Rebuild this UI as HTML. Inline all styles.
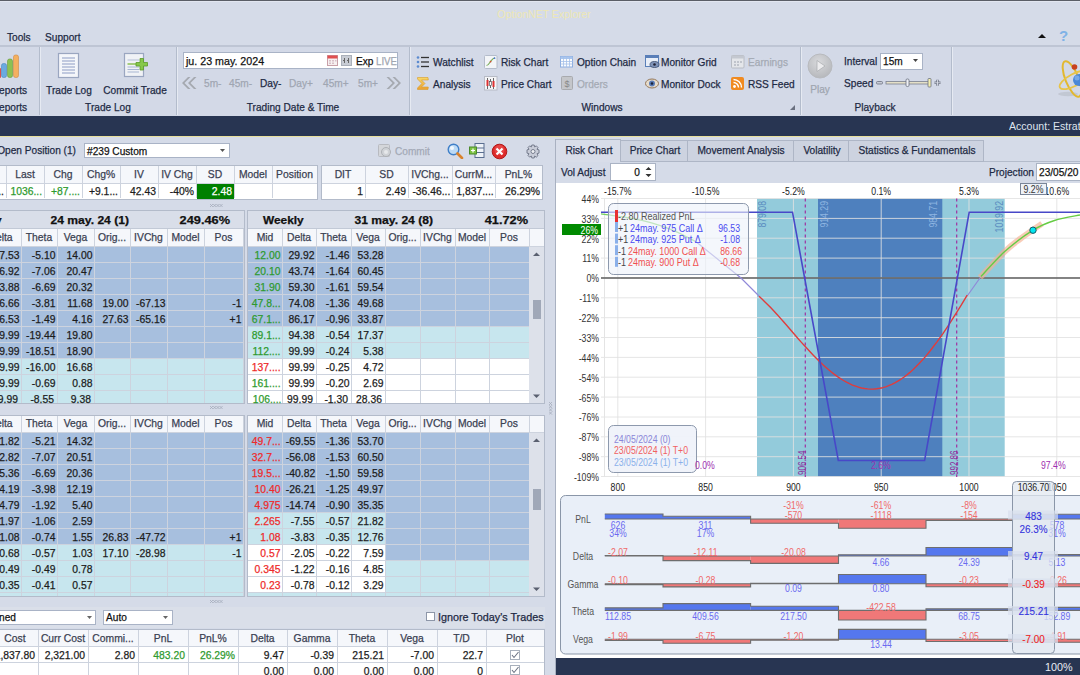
<!DOCTYPE html><html><head><meta charset="utf-8"><style>
html,body{margin:0;padding:0;width:1080px;height:675px;overflow:hidden;background:#d5dbe8;font-family:"Liberation Sans", sans-serif;}
#root{position:relative;width:1080px;height:675px;overflow:hidden;}
.t{position:absolute;font-size:11px;line-height:13px;white-space:nowrap;color:#1e2535;-webkit-text-stroke:0.25px currentColor;}
</style></head><body><div id="root">
<div style="position:absolute;left:0px;top:0px;width:1080px;height:116px;background:#d5dbe8;"></div>
<div style="position:absolute;left:0px;top:0px;width:1080px;height:1px;background:#5a5e66;"></div>
<div class="t" style="left:444.0px;top:8px;width:200px;text-align:center;transform:scaleX(0.95);color:#ede7b4;-webkit-text-stroke:0;">OptionNET Explorer</div>
<div class="t" style="left:7px;top:31px;transform-origin:0 0;transform:scaleX(0.92);color:#1e2a44;">Tools</div>
<div class="t" style="left:45px;top:31px;transform-origin:0 0;transform:scaleX(0.92);color:#1e2a44;">Support</div>
<svg style="position:absolute;left:1037px;top:33px" width="10" height="6"><path d="M1 5 L5 1 L9 5 Z" fill="#111"/></svg>
<div class="t" style="left:1059px;top:28px;transform-origin:0 0;transform:scaleX(1);color:#7fb2e6;font-size:15px;font-weight:bold;line-height:16px;-webkit-text-stroke:0;">?</div>
<div style="position:absolute;left:0px;top:47px;width:1080px;height:69px;background:#d3d9e7;"></div>
<div style="position:absolute;left:0px;top:45px;width:1080px;height:2px;background:#bec5d4;"></div>
<div style="position:absolute;left:0px;top:1px;width:1080px;height:1px;background:#e2e6f0;"></div>
<div style="position:absolute;left:39px;top:47px;width:1px;height:68px;background:#b3bccc;"></div>
<div style="position:absolute;left:40px;top:47px;width:1px;height:68px;background:#e6eaf2;"></div>
<div style="position:absolute;left:176px;top:47px;width:1px;height:68px;background:#b3bccc;"></div>
<div style="position:absolute;left:177px;top:47px;width:1px;height:68px;background:#e6eaf2;"></div>
<div style="position:absolute;left:409px;top:47px;width:1px;height:68px;background:#b3bccc;"></div>
<div style="position:absolute;left:410px;top:47px;width:1px;height:68px;background:#e6eaf2;"></div>
<div style="position:absolute;left:800px;top:47px;width:1px;height:68px;background:#b3bccc;"></div>
<div style="position:absolute;left:801px;top:47px;width:1px;height:68px;background:#e6eaf2;"></div>
<div style="position:absolute;left:951px;top:47px;width:1px;height:68px;background:#b3bccc;"></div>
<div style="position:absolute;left:952px;top:47px;width:1px;height:68px;background:#e6eaf2;"></div>
<svg style="position:absolute;left:0px;top:52px" width="22" height="28">
<rect x="-2" y="16" width="3" height="10" rx="1" fill="#d9534f"/>
<rect x="1.5" y="11.5" width="5" height="14" rx="2" fill="#6aaae0" stroke="#4a86c0" stroke-width="0.6"/>
<rect x="7.5" y="7" width="5" height="18.5" rx="2" fill="#8cc152" stroke="#6a9a3a" stroke-width="0.6"/>
<rect x="13.5" y="3" width="5" height="22.5" rx="2" fill="#f4b060" stroke="#d08a40" stroke-width="0.6"/>
</svg>
<div class="t" style="left:-1px;top:84px;transform-origin:0 0;transform:scaleX(0.92);color:#1e2a44;">eports</div>
<div class="t" style="left:-1px;top:101px;transform-origin:0 0;transform:scaleX(0.92);color:#1e2a44;">eports</div>
<svg style="position:absolute;left:57px;top:52px" width="24" height="28">
<rect x="1.5" y="1.5" width="20" height="24" fill="#f4f6fa" stroke="#9aa6c0" stroke-width="1.2"/>
<g stroke="#8d9cc4" stroke-width="1"><line x1="5" y1="6" x2="18" y2="6"/><line x1="5" y1="9" x2="18" y2="9"/><line x1="5" y1="12" x2="18" y2="12"/><line x1="5" y1="15" x2="18" y2="15"/><line x1="5" y1="18" x2="18" y2="18"/><line x1="5" y1="21" x2="18" y2="21"/></g>
</svg>
<svg style="position:absolute;left:123px;top:52px" width="28" height="28">
<rect x="1.5" y="1.5" width="19" height="23" fill="#f0f2f6" stroke="#9aa6c0" stroke-width="1.2"/>
<line x1="4.5" y1="8" x2="16" y2="8" stroke="#b4bfd6" stroke-width="1"/>
<line x1="4.5" y1="12" x2="13" y2="12" stroke="#8cc152" stroke-width="1.5"/>
<g stroke="#a8b6d2" stroke-width="1"><line x1="4.5" y1="15" x2="16" y2="15"/><line x1="4.5" y1="17.5" x2="16" y2="17.5"/><line x1="4.5" y1="20" x2="16" y2="20"/></g>
<path d="M17 6.5 h3.5 v4 h4 v3.5 h-4 v4 h-3.5 v-4 h-4 v-3.5 h4 z" fill="#86c84a" stroke="#5a9a2a" stroke-width="0.8"/>
</svg>
<div class="t" style="left:-31.0px;top:84px;width:200px;text-align:center;transform:scaleX(0.92);color:#1e2a44;">Trade Log</div>
<div class="t" style="left:35.0px;top:84px;width:200px;text-align:center;transform:scaleX(0.92);color:#1e2a44;">Commit Trade</div>
<div class="t" style="left:8.0px;top:101px;width:200px;text-align:center;transform:scaleX(0.92);color:#1e2a44;">Trade Log</div>
<div style="position:absolute;left:183px;top:52px;width:215px;height:17px;background:#fff;border:1px solid #a9b3c6;box-sizing:border-box;"></div>
<div class="t" style="left:186px;top:55px;transform-origin:0 0;transform:scaleX(0.97);color:#111;">ju. 23 may. 2024</div>
<svg style="position:absolute;left:327px;top:55px" width="12" height="11">
<rect x="0.5" y="0.5" width="10" height="10" fill="#f7f0f0" stroke="#c8a0a8"/>
<rect x="0.5" y="0.5" width="10" height="3" fill="#e05050"/>
<g fill="#d8c0c8"><rect x="2" y="5" width="2" height="1.5"/><rect x="5" y="5" width="2" height="1.5"/><rect x="2" y="7.5" width="2" height="1.5"/><rect x="5" y="7.5" width="2" height="1.5"/><rect x="8" y="5" width="1.5" height="1.5"/></g>
</svg>
<svg style="position:absolute;left:341px;top:55px" width="12" height="11">
<rect x="0.5" y="0.5" width="10" height="10" fill="#c8ccd4" stroke="#aab0ba"/>
<path d="M3.5 3 v5 M7.5 3 v5 M2 5.5 h2 M6 5.5 h2" stroke="#666" stroke-width="1"/>
</svg>
<div class="t" style="left:356px;top:55px;transform-origin:0 0;transform:scaleX(0.92);color:#111;">Exp</div>
<div class="t" style="left:376px;top:55px;transform-origin:0 0;transform:scaleX(0.88);color:#a0a6b0;">LIVE</div>
<svg style="position:absolute;left:181px;top:76px" width="16" height="14">
<path d="M7 1 L1 7 L7 13 L9.5 13 L3.5 7 L9.5 1 Z M13 1 L7 7 L13 13 L15.5 13 L9.5 7 L15.5 1 Z" fill="#a5a9b0"/>
</svg>
<svg style="position:absolute;left:386px;top:76px" width="16" height="14">
<path d="M9 1 L15 7 L9 13 L6.5 13 L12.5 7 L6.5 1 Z M3 1 L9 7 L3 13 L0.5 13 L6.5 7 L0.5 1 Z" fill="#a5a9b0"/>
</svg>
<div class="t" style="left:204px;top:77px;transform-origin:0 0;transform:scaleX(0.92);color:#a0a6b2;">5m-</div>
<div class="t" style="left:229px;top:77px;transform-origin:0 0;transform:scaleX(0.92);color:#a0a6b2;">45m-</div>
<div class="t" style="left:260px;top:77px;transform-origin:0 0;transform:scaleX(0.92);color:#1e2a44;">Day-</div>
<div class="t" style="left:289px;top:77px;transform-origin:0 0;transform:scaleX(0.92);color:#a0a6b2;">Day+</div>
<div class="t" style="left:323px;top:77px;transform-origin:0 0;transform:scaleX(0.92);color:#a0a6b2;">45m+</div>
<div class="t" style="left:358px;top:77px;transform-origin:0 0;transform:scaleX(0.92);color:#a0a6b2;">5m+</div>
<div class="t" style="left:193.0px;top:101px;width:200px;text-align:center;transform:scaleX(0.92);color:#1e2a44;">Trading Date &amp; Time</div>
<svg style="position:absolute;left:416px;top:55px" width="14" height="14">
<g fill="#5b8bd0"><circle cx="2" cy="2.5" r="1.3"/><circle cx="2" cy="7" r="1.3"/><circle cx="2" cy="11.5" r="1.3"/></g>
<g stroke="#333" stroke-width="1.3"><line x1="5" y1="2.5" x2="13" y2="2.5"/><line x1="5" y1="7" x2="13" y2="7"/><line x1="5" y1="11.5" x2="13" y2="11.5"/></g>
</svg>
<div class="t" style="left:433px;top:56px;transform-origin:0 0;transform:scaleX(0.92);color:#1e2a44;">Watchlist</div>
<svg style="position:absolute;left:484px;top:54px" width="14" height="15">
<rect x="0.5" y="1.5" width="12.5" height="13" rx="1" fill="#f3f5f8" stroke="#b4bccb"/>
<path d="M2.5 11.5 C4.5 11.5 5 9.5 6.5 7.5 C8 5.5 9 4 11 4" stroke="#77aa55" stroke-width="1.1" fill="none"/>
<circle cx="6.6" cy="7.6" r="0.9" fill="#d05030"/><circle cx="10.5" cy="4.2" r="0.9" fill="#4a7ad0"/>
</svg>
<div class="t" style="left:501px;top:56px;transform-origin:0 0;transform:scaleX(0.92);color:#1e2a44;">Risk Chart</div>
<svg style="position:absolute;left:560px;top:55px" width="14" height="14">
<rect x="0.5" y="1.5" width="12" height="10.5" fill="#fbfcfe" stroke="#8eaee0"/>
<rect x="0.5" y="1.5" width="12" height="2.5" fill="#a9c6ee"/>
<path d="M0.5 6.5 h12 M0.5 9 h12 M3.5 1.5 v10.5 M6.5 1.5 v10.5 M9.5 1.5 v10.5" stroke="#a6c0ea" stroke-width="0.8"/>
</svg>
<div class="t" style="left:577px;top:56px;transform-origin:0 0;transform:scaleX(0.92);color:#1e2a44;">Option Chain</div>
<svg style="position:absolute;left:645px;top:55px" width="15" height="14">
<rect x="0.5" y="0.5" width="13" height="11" fill="#e8eef8" stroke="#5a7fb8"/>
<rect x="0.5" y="0.5" width="13" height="2.5" fill="#5a7fb8"/>
<ellipse cx="9.5" cy="9.5" rx="4.5" ry="3" fill="#7f93b8" stroke="#3a4a6a" stroke-width="0.8"/>
<circle cx="9.5" cy="9.5" r="1.3" fill="#223"/>
</svg>
<div class="t" style="left:661px;top:56px;transform-origin:0 0;transform:scaleX(0.92);color:#1e2a44;">Monitor Grid</div>
<svg style="position:absolute;left:731px;top:55px" width="14" height="14">
<rect x="0.5" y="0.5" width="12.5" height="12.5" rx="1" fill="#e4e6ea" stroke="#b8bcc4"/>
<rect x="0.5" y="0.5" width="12.5" height="3" fill="#c4c8d0"/>
<g fill="#c0c4cc"><rect x="3" y="6" width="2" height="2"/><rect x="6" y="6" width="2" height="2"/><rect x="9" y="6" width="2" height="2"/><rect x="3" y="9" width="2" height="2"/><rect x="6" y="9" width="2" height="2"/></g>
</svg>
<div class="t" style="left:748px;top:56px;transform-origin:0 0;transform:scaleX(0.92);color:#a4aab4;">Earnings</div>
<svg style="position:absolute;left:416px;top:76px" width="14" height="15">
<defs><linearGradient id="sg" x1="0" y1="0" x2="0" y2="1"><stop offset="0" stop-color="#f8d868"/><stop offset="1" stop-color="#eaa030"/></linearGradient></defs>
<path d="M1.5 1.5 H12 L12.3 4 H5.5 L9 7.5 L5.5 11 H12.3 L12 13.5 H1.5 V12 L5.8 7.5 L1.5 3 Z" fill="url(#sg)" stroke="#d89a28" stroke-width="0.6"/>
</svg>
<div class="t" style="left:433px;top:78px;transform-origin:0 0;transform:scaleX(0.92);color:#1e2a44;">Analysis</div>
<svg style="position:absolute;left:484px;top:76px" width="14" height="15">
<rect x="0.5" y="0.5" width="12.5" height="13.5" fill="#f5f6f8" stroke="#b8bcc6"/>
<path d="M3.5 2 v11 M6.5 3 v9 M9.5 2 v11" stroke="#444" stroke-width="0.8"/>
<rect x="2.5" y="4" width="2" height="6" fill="#dd3333"/><rect x="8.5" y="5" width="2" height="6" fill="#dd3333"/><rect x="5.5" y="5.5" width="2" height="4" fill="#fff" stroke="#444" stroke-width="0.6"/>
</svg>
<div class="t" style="left:501px;top:78px;transform-origin:0 0;transform:scaleX(0.92);color:#1e2a44;">Price Chart</div>
<svg style="position:absolute;left:561px;top:76px" width="13" height="15">
<rect x="0.5" y="0.5" width="11" height="13" rx="1" fill="#c4c6ca" stroke="#a8aaae"/>
<text x="6" y="11" font-size="9" text-anchor="middle" fill="#888" font-family="Liberation Sans">$</text>
</svg>
<div class="t" style="left:577px;top:78px;transform-origin:0 0;transform:scaleX(0.92);color:#a4aab4;">Orders</div>
<svg style="position:absolute;left:645px;top:78px" width="15" height="11">
<ellipse cx="7" cy="5.5" rx="6.5" ry="4.5" fill="#e6dccc" stroke="#8a6a48" stroke-width="0.9"/>
<circle cx="7" cy="5.5" r="3" fill="#5a7cb8"/><circle cx="7" cy="5.5" r="1.3" fill="#1a2238"/>
</svg>
<div class="t" style="left:661px;top:78px;transform-origin:0 0;transform:scaleX(0.92);color:#1e2a44;">Monitor Dock</div>
<svg style="position:absolute;left:731px;top:77px" width="14" height="14">
<rect x="0" y="0" width="13" height="13" rx="2" fill="#f08a20"/>
<circle cx="3.5" cy="9.5" r="1.4" fill="#fff"/>
<path d="M2.5 5.5 A5 5 0 0 1 7.5 10.5 M2.5 2.5 A8 8 0 0 1 10.5 10.5" stroke="#fff" stroke-width="1.4" fill="none"/>
</svg>
<div class="t" style="left:748px;top:78px;transform-origin:0 0;transform:scaleX(0.92);color:#1e2a44;">RSS Feed</div>
<div class="t" style="left:502.0px;top:101px;width:200px;text-align:center;transform:scaleX(0.92);color:#1e2a44;">Windows</div>
<svg style="position:absolute;left:790px;top:105px" width="6" height="6"><path d="M5 0 V5 H0 Z" fill="#6a7080"/></svg>
<svg style="position:absolute;left:807px;top:53px" width="26" height="26">
<defs><radialGradient id="pg" cx="0.45" cy="0.35" r="0.7"><stop offset="0" stop-color="#d8d9dc"/><stop offset="1" stop-color="#b4b6ba"/></radialGradient></defs>
<circle cx="13" cy="13" r="12" fill="url(#pg)" stroke="#b8babe"/>
<path d="M10 7.5 L18 13 L10 18.5 Z" fill="#ececee" stroke="#a8aaae" stroke-width="0.7"/>
</svg>
<div class="t" style="left:720.0px;top:83px;width:200px;text-align:center;transform:scaleX(0.92);color:#a0a6b0;">Play</div>
<div class="t" style="left:844px;top:55px;transform-origin:0 0;transform:scaleX(0.92);color:#1e2a44;">Interval</div>
<div style="position:absolute;left:880px;top:53px;width:43px;height:17px;background:#fff;border:1px solid #a9b3c6;box-sizing:border-box;"></div>
<div class="t" style="left:883px;top:55px;transform-origin:0 0;transform:scaleX(0.92);color:#111;">15m</div>
<svg style="position:absolute;left:913px;top:59px" width="6" height="4"><path d="M0 0 H5 L2.5 3 Z" fill="#444"/></svg>
<div class="t" style="left:844px;top:77px;transform-origin:0 0;transform:scaleX(0.92);color:#1e2a44;">Speed</div>
<svg style="position:absolute;left:876px;top:77px" width="66" height="12">
<rect x="0.5" y="4.5" width="6" height="2.5" rx="1" fill="#c8ccd6" stroke="#6a7080" stroke-width="0.8"/>
<rect x="10" y="4.5" width="43" height="2.5" fill="#e4e0c8" stroke="#7a8090" stroke-width="0.8"/>
<rect x="30" y="2" width="3" height="7.5" rx="1.2" fill="#eef0f4" stroke="#6a7080" stroke-width="0.8"/>
<rect x="52" y="1.5" width="3" height="8.5" rx="0.8" fill="#f4efb0" stroke="#6a7080" stroke-width="0.8"/>
<path d="M58.5 5.8 H64.5 M61.5 2.8 V8.8" stroke="#6a7080" stroke-width="2.4"/>
<path d="M58.5 5.8 H64.5 M61.5 2.8 V8.8" stroke="#d8dce6" stroke-width="0.9"/>
</svg>
<div class="t" style="left:775.0px;top:101px;width:200px;text-align:center;transform:scaleX(0.92);color:#1e2a44;">Playback</div>
<svg style="position:absolute;left:1055px;top:55px" width="25" height="48">
<ellipse cx="13" cy="39" rx="10" ry="2.2" fill="#b8bcc6" opacity="0.6"/>
<ellipse cx="17" cy="24" rx="6.5" ry="19" transform="rotate(-22 17 24)" fill="none" stroke="#e2b830" stroke-width="2"/>
<ellipse cx="19" cy="25" rx="16" ry="6" transform="rotate(-28 19 25)" fill="none" stroke="#e8c448" stroke-width="1.8"/>
<circle cx="24" cy="25" r="6" fill="#4a88d8"/>
<circle cx="22" cy="23" r="2.5" fill="#8ab8ee" opacity="0.7"/>
<circle cx="19.5" cy="12" r="2.8" fill="#c8401e"/>
</svg>
<div style="position:absolute;left:0px;top:116px;width:1080px;height:20px;background:#283552;"></div>
<div style="position:absolute;left:0px;top:136px;width:1080px;height:1px;background:#e7df9c;"></div>
<div class="t" style="left:1009px;top:120px;transform-origin:0 0;transform:scaleX(0.96);color:#dfe4ee;-webkit-text-stroke:0;">Account: Estrate</div>
<div class="t" style="left:-124px;top:144px;width:200px;text-align:right;transform-origin:100% 0;transform:scaleX(0.92);color:#1e2a44;">Open Position (1)</div>
<div style="position:absolute;left:84px;top:143px;width:146px;height:15px;background:#fff;border:1px solid #a9b3c6;box-sizing:border-box;"></div>
<div class="t" style="left:87px;top:145px;transform-origin:0 0;transform:scaleX(0.92);color:#111;">#239 Custom</div>
<svg style="position:absolute;left:220px;top:149px" width="6" height="4"><path d="M0 0 H5 L2.5 3 Z" fill="#555"/></svg>
<svg style="position:absolute;left:378px;top:144px" width="14" height="14">
<rect x="0.5" y="0.5" width="11" height="12" rx="1" fill="#d4d6da" stroke="#b8bac0"/>
<circle cx="8" cy="8" r="4.5" fill="#cfd2d6" stroke="#aeb1b6"/><circle cx="8" cy="8" r="2" fill="#e6e8ea"/>
</svg>
<div class="t" style="left:395px;top:145px;transform-origin:0 0;transform:scaleX(0.92);color:#a3a9b6;">Commit</div>
<svg style="position:absolute;left:447px;top:143px" width="17" height="16">
<circle cx="6.5" cy="6.5" r="5.3" fill="#bcdaf5" stroke="#3f7fc8" stroke-width="1.4"/>
<circle cx="5" cy="5" r="2" fill="#fff" opacity="0.8"/>
<path d="M10.5 10.5 L15 15" stroke="#d9822b" stroke-width="2.6" stroke-linecap="round"/>
</svg>
<svg style="position:absolute;left:469px;top:143px" width="16" height="15">
<rect x="6" y="0.5" width="9" height="14" fill="#eef2f8" stroke="#5a6e90"/>
<path d="M6 5 H15 M6 9.5 H15" stroke="#5a6e90"/>
<rect x="0.5" y="4" width="7" height="7" fill="#7cc242" stroke="#4a8a2a"/>
<path d="M2 7.5 H6 M4 5.5 V9.5" stroke="#fff" stroke-width="1.2"/>
</svg>
<svg style="position:absolute;left:491px;top:143px" width="17" height="17">
<circle cx="8.5" cy="8.5" r="7.3" fill="#dd2a2a" stroke="#b01818"/>
<circle cx="8.5" cy="7" r="5" fill="#f06060" opacity="0.5"/>
<path d="M5.5 5.5 L11.5 11.5 M11.5 5.5 L5.5 11.5" stroke="#fff" stroke-width="2.2"/>
</svg>
<svg style="position:absolute;left:525px;top:144px" width="16" height="15">
<g transform="translate(8 7.5)">
<path d="M-1.2 -6.5 H1.2 L1.6 -4.6 L3.4 -5.6 L5 -4 L4 -2.2 L6 -1.6 V1.6 L4 2.2 L5 4 L3.4 5.6 L1.6 4.6 L1.2 6.5 H-1.2 L-1.6 4.6 L-3.4 5.6 L-5 4 L-4 2.2 L-6 1.6 V-1.6 L-4 -2.2 L-5 -4 L-3.4 -5.6 L-1.6 -4.6 Z" fill="#c8ccd8" stroke="#6d7486" stroke-width="0.9"/>
<circle r="2" fill="#eef0f4" stroke="#6d7486" stroke-width="0.9"/></g>
</svg>
<div style="position:absolute;left:-1px;top:165px;width:319px;height:35px;background:#ffffff;border:1px solid #b3bbca;box-sizing:border-box;"></div>
<div style="position:absolute;left:0px;top:166px;width:317px;height:17px;background:#f5f7fb;"></div>
<div style="position:absolute;left:6px;top:166px;width:1px;height:32px;background:#cdd3de;"></div>
<div style="position:absolute;left:44px;top:166px;width:1px;height:32px;background:#cdd3de;"></div>
<div style="position:absolute;left:82px;top:166px;width:1px;height:32px;background:#cdd3de;"></div>
<div style="position:absolute;left:120px;top:166px;width:1px;height:32px;background:#cdd3de;"></div>
<div style="position:absolute;left:158px;top:166px;width:1px;height:32px;background:#cdd3de;"></div>
<div style="position:absolute;left:196px;top:166px;width:1px;height:32px;background:#cdd3de;"></div>
<div style="position:absolute;left:234px;top:166px;width:1px;height:32px;background:#cdd3de;"></div>
<div style="position:absolute;left:272px;top:166px;width:1px;height:32px;background:#cdd3de;"></div>
<div style="position:absolute;left:0px;top:183px;width:317px;height:1px;background:#cdd3de;"></div>
<div style="position:absolute;left:197px;top:184px;width:37px;height:15px;background:#008000;"></div>
<div class="t" style="left:-8px;top:185.0px;width:12px;text-align:right;transform-origin:100% 0;transform:scaleX(0.94);color:#1c1c1c;">..</div>
<div class="t" style="left:7px;top:168.0px;width:36px;text-align:center;transform-origin:50% 0;transform:scaleX(0.94);color:#3a4152;">Last</div>
<div class="t" style="left:8px;top:185.0px;width:34px;text-align:right;transform-origin:100% 0;transform:scaleX(0.94);color:#2e9a2e;">1036...</div>
<div class="t" style="left:45px;top:168.0px;width:36px;text-align:center;transform-origin:50% 0;transform:scaleX(0.94);color:#3a4152;">Chg</div>
<div class="t" style="left:46px;top:185.0px;width:34px;text-align:right;transform-origin:100% 0;transform:scaleX(0.94);color:#2e9a2e;">+87....</div>
<div class="t" style="left:83px;top:168.0px;width:36px;text-align:center;transform-origin:50% 0;transform:scaleX(0.94);color:#3a4152;">Chg%</div>
<div class="t" style="left:84px;top:185.0px;width:34px;text-align:right;transform-origin:100% 0;transform:scaleX(0.94);color:#1c1c1c;">+9.1...</div>
<div class="t" style="left:121px;top:168.0px;width:36px;text-align:center;transform-origin:50% 0;transform:scaleX(0.94);color:#3a4152;">IV</div>
<div class="t" style="left:122px;top:185.0px;width:34px;text-align:right;transform-origin:100% 0;transform:scaleX(0.94);color:#1c1c1c;">42.43</div>
<div class="t" style="left:159px;top:168.0px;width:36px;text-align:center;transform-origin:50% 0;transform:scaleX(0.94);color:#3a4152;">IV Chg</div>
<div class="t" style="left:160px;top:185.0px;width:34px;text-align:right;transform-origin:100% 0;transform:scaleX(0.94);color:#1c1c1c;">-40%</div>
<div class="t" style="left:197px;top:168.0px;width:36px;text-align:center;transform-origin:50% 0;transform:scaleX(0.94);color:#3a4152;">SD</div>
<div class="t" style="left:198px;top:185.0px;width:34px;text-align:right;transform-origin:100% 0;transform:scaleX(0.94);color:#ffffff;">2.48</div>
<div class="t" style="left:235px;top:168.0px;width:36px;text-align:center;transform-origin:50% 0;transform:scaleX(0.94);color:#3a4152;">Model</div>
<div class="t" style="left:273px;top:168.0px;width:43px;text-align:center;transform-origin:50% 0;transform:scaleX(0.94);color:#3a4152;">Position</div>
<div style="position:absolute;left:321px;top:165px;width:222px;height:35px;background:#ffffff;border:1px solid #b3bbca;box-sizing:border-box;"></div>
<div style="position:absolute;left:322px;top:166px;width:220px;height:17px;background:#f5f7fb;"></div>
<div style="position:absolute;left:365px;top:166px;width:1px;height:32px;background:#cdd3de;"></div>
<div style="position:absolute;left:408px;top:166px;width:1px;height:32px;background:#cdd3de;"></div>
<div style="position:absolute;left:452px;top:166px;width:1px;height:32px;background:#cdd3de;"></div>
<div style="position:absolute;left:495px;top:166px;width:1px;height:32px;background:#cdd3de;"></div>
<div style="position:absolute;left:322px;top:183px;width:220px;height:1px;background:#cdd3de;"></div>
<div class="t" style="left:322px;top:168.0px;width:42px;text-align:center;transform-origin:50% 0;transform:scaleX(0.94);color:#3a4152;">DIT</div>
<div class="t" style="left:323px;top:185.0px;width:40px;text-align:right;transform-origin:100% 0;transform:scaleX(0.94);color:#1c1c1c;">1</div>
<div class="t" style="left:366px;top:168.0px;width:41px;text-align:center;transform-origin:50% 0;transform:scaleX(0.94);color:#3a4152;">SD</div>
<div class="t" style="left:367px;top:185.0px;width:39px;text-align:right;transform-origin:100% 0;transform:scaleX(0.94);color:#1c1c1c;">2.49</div>
<div class="t" style="left:409px;top:168.0px;width:42px;text-align:center;transform-origin:50% 0;transform:scaleX(0.94);color:#3a4152;">IVChg...</div>
<div class="t" style="left:410px;top:185.0px;width:40px;text-align:right;transform-origin:100% 0;transform:scaleX(0.94);color:#1c1c1c;">-36.46...</div>
<div class="t" style="left:453px;top:168.0px;width:41px;text-align:center;transform-origin:50% 0;transform:scaleX(0.94);color:#3a4152;">CurrM...</div>
<div class="t" style="left:454px;top:185.0px;width:39px;text-align:right;transform-origin:100% 0;transform:scaleX(0.94);color:#1c1c1c;">1,837....</div>
<div class="t" style="left:496px;top:168.0px;width:45px;text-align:center;transform-origin:50% 0;transform:scaleX(0.94);color:#3a4152;">PnL%</div>
<div class="t" style="left:497px;top:185.0px;width:43px;text-align:right;transform-origin:100% 0;transform:scaleX(0.94);color:#1c1c1c;">26.29%</div>
<svg style="position:absolute;left:210px;top:204px" width="14" height="4"><g stroke="#a4acbb" stroke-width="0.8" fill="none"><path d="M0.0 0 L3.0 3 M3.0 0 L0.0 3" /><path d="M3.2 0 L6.2 3 M6.2 0 L3.2 3" /><path d="M6.4 0 L9.4 3 M9.4 0 L6.4 3" /><path d="M9.600000000000001 0 L12.600000000000001 3 M12.600000000000001 0 L9.600000000000001 3" /></g></svg>
<svg style="position:absolute;left:210px;top:406px" width="14" height="4"><g stroke="#a4acbb" stroke-width="0.8" fill="none"><path d="M0.0 0 L3.0 3 M3.0 0 L0.0 3" /><path d="M3.2 0 L6.2 3 M6.2 0 L3.2 3" /><path d="M6.4 0 L9.4 3 M9.4 0 L6.4 3" /><path d="M9.600000000000001 0 L12.600000000000001 3 M12.600000000000001 0 L9.600000000000001 3" /></g></svg>
<svg style="position:absolute;left:210px;top:600px" width="14" height="4"><g stroke="#a4acbb" stroke-width="0.8" fill="none"><path d="M0.0 0 L3.0 3 M3.0 0 L0.0 3" /><path d="M3.2 0 L6.2 3 M6.2 0 L3.2 3" /><path d="M6.4 0 L9.4 3 M9.4 0 L6.4 3" /><path d="M9.600000000000001 0 L12.600000000000001 3 M12.600000000000001 0 L9.600000000000001 3" /></g></svg>
<svg style="position:absolute;left:549px;top:402px" width="4" height="14"><g stroke="#a4acbb" stroke-width="0.8" fill="none"><path d="M0 0.0 L3 3.0 M3 0.0 L0 3.0" /><path d="M0 3.2 L3 6.2 M3 3.2 L0 6.2" /><path d="M0 6.4 L3 9.4 M3 6.4 L0 9.4" /><path d="M0 9.600000000000001 L3 12.600000000000001 M3 9.600000000000001 L0 12.600000000000001" /></g></svg>
<div style="position:absolute;left:-1px;top:210px;width:246px;height:194px;background:#ffffff;border:1px solid #b3bbca;box-sizing:border-box;"></div>
<div style="position:absolute;left:0px;top:211px;width:244px;height:17px;background:#d9dee9;"></div>
<div style="position:absolute;left:0px;top:228px;width:244px;height:1px;background:#c2c9d6;"></div>
<div class="t" style="left:-39px;top:214px;transform-origin:0 0;transform:scaleX(1.08);font-weight:bold;color:#111;">Weekly</div>
<div class="t" style="left:-71px;top:214px;width:200px;text-align:right;transform-origin:100% 0;transform:scaleX(1.1);font-weight:bold;color:#111;">24 may. 24 (1)</div>
<div class="t" style="left:30px;top:214px;width:200px;text-align:right;transform-origin:100% 0;transform:scaleX(1.16);font-weight:bold;color:#111;">249.46%</div>
<div style="position:absolute;left:0px;top:229px;width:244px;height:18px;background:#f5f7fb;"></div>
<div style="position:absolute;left:-20px;top:247px;width:41px;height:16px;background:#a7bfde;"></div>
<div style="position:absolute;left:21px;top:247px;width:36px;height:16px;background:#a7bfde;"></div>
<div style="position:absolute;left:57px;top:247px;width:37px;height:16px;background:#a7bfde;"></div>
<div style="position:absolute;left:94px;top:247px;width:36px;height:16px;background:#a7bfde;"></div>
<div style="position:absolute;left:130px;top:247px;width:37px;height:16px;background:#a7bfde;"></div>
<div style="position:absolute;left:167px;top:247px;width:37px;height:16px;background:#a7bfde;"></div>
<div style="position:absolute;left:204px;top:247px;width:39px;height:16px;background:#a7bfde;"></div>
<div style="position:absolute;left:-20px;top:263px;width:41px;height:16px;background:#a7bfde;"></div>
<div style="position:absolute;left:21px;top:263px;width:36px;height:16px;background:#a7bfde;"></div>
<div style="position:absolute;left:57px;top:263px;width:37px;height:16px;background:#a7bfde;"></div>
<div style="position:absolute;left:94px;top:263px;width:36px;height:16px;background:#a7bfde;"></div>
<div style="position:absolute;left:130px;top:263px;width:37px;height:16px;background:#a7bfde;"></div>
<div style="position:absolute;left:167px;top:263px;width:37px;height:16px;background:#a7bfde;"></div>
<div style="position:absolute;left:204px;top:263px;width:39px;height:16px;background:#a7bfde;"></div>
<div style="position:absolute;left:-20px;top:279px;width:41px;height:16px;background:#a7bfde;"></div>
<div style="position:absolute;left:21px;top:279px;width:36px;height:16px;background:#a7bfde;"></div>
<div style="position:absolute;left:57px;top:279px;width:37px;height:16px;background:#a7bfde;"></div>
<div style="position:absolute;left:94px;top:279px;width:36px;height:16px;background:#a7bfde;"></div>
<div style="position:absolute;left:130px;top:279px;width:37px;height:16px;background:#a7bfde;"></div>
<div style="position:absolute;left:167px;top:279px;width:37px;height:16px;background:#a7bfde;"></div>
<div style="position:absolute;left:204px;top:279px;width:39px;height:16px;background:#a7bfde;"></div>
<div style="position:absolute;left:-20px;top:295px;width:41px;height:16px;background:#a7bfde;"></div>
<div style="position:absolute;left:21px;top:295px;width:36px;height:16px;background:#a7bfde;"></div>
<div style="position:absolute;left:57px;top:295px;width:37px;height:16px;background:#a7bfde;"></div>
<div style="position:absolute;left:94px;top:295px;width:36px;height:16px;background:#a7bfde;"></div>
<div style="position:absolute;left:130px;top:295px;width:37px;height:16px;background:#a7bfde;"></div>
<div style="position:absolute;left:167px;top:295px;width:37px;height:16px;background:#a7bfde;"></div>
<div style="position:absolute;left:204px;top:295px;width:39px;height:16px;background:#a7bfde;"></div>
<div style="position:absolute;left:-20px;top:311px;width:41px;height:16px;background:#a7bfde;"></div>
<div style="position:absolute;left:21px;top:311px;width:36px;height:16px;background:#a7bfde;"></div>
<div style="position:absolute;left:57px;top:311px;width:37px;height:16px;background:#a7bfde;"></div>
<div style="position:absolute;left:94px;top:311px;width:36px;height:16px;background:#a7bfde;"></div>
<div style="position:absolute;left:130px;top:311px;width:37px;height:16px;background:#a7bfde;"></div>
<div style="position:absolute;left:167px;top:311px;width:37px;height:16px;background:#a7bfde;"></div>
<div style="position:absolute;left:204px;top:311px;width:39px;height:16px;background:#a7bfde;"></div>
<div style="position:absolute;left:-20px;top:327px;width:41px;height:16px;background:#a7bfde;"></div>
<div style="position:absolute;left:21px;top:327px;width:36px;height:16px;background:#a7bfde;"></div>
<div style="position:absolute;left:57px;top:327px;width:37px;height:16px;background:#a7bfde;"></div>
<div style="position:absolute;left:94px;top:327px;width:36px;height:16px;background:#a7bfde;"></div>
<div style="position:absolute;left:130px;top:327px;width:37px;height:16px;background:#a7bfde;"></div>
<div style="position:absolute;left:167px;top:327px;width:37px;height:16px;background:#a7bfde;"></div>
<div style="position:absolute;left:204px;top:327px;width:39px;height:16px;background:#a7bfde;"></div>
<div style="position:absolute;left:-20px;top:343px;width:41px;height:16px;background:#a7bfde;"></div>
<div style="position:absolute;left:21px;top:343px;width:36px;height:16px;background:#a7bfde;"></div>
<div style="position:absolute;left:57px;top:343px;width:37px;height:16px;background:#a7bfde;"></div>
<div style="position:absolute;left:94px;top:343px;width:36px;height:16px;background:#a7bfde;"></div>
<div style="position:absolute;left:130px;top:343px;width:37px;height:16px;background:#a7bfde;"></div>
<div style="position:absolute;left:167px;top:343px;width:37px;height:16px;background:#a7bfde;"></div>
<div style="position:absolute;left:204px;top:343px;width:39px;height:16px;background:#a7bfde;"></div>
<div style="position:absolute;left:-20px;top:359px;width:41px;height:16px;background:#c7e6ee;"></div>
<div style="position:absolute;left:21px;top:359px;width:36px;height:16px;background:#c7e6ee;"></div>
<div style="position:absolute;left:57px;top:359px;width:37px;height:16px;background:#c7e6ee;"></div>
<div style="position:absolute;left:94px;top:359px;width:36px;height:16px;background:#c7e6ee;"></div>
<div style="position:absolute;left:130px;top:359px;width:37px;height:16px;background:#c7e6ee;"></div>
<div style="position:absolute;left:167px;top:359px;width:37px;height:16px;background:#c7e6ee;"></div>
<div style="position:absolute;left:204px;top:359px;width:39px;height:16px;background:#c7e6ee;"></div>
<div style="position:absolute;left:-20px;top:375px;width:41px;height:16px;background:#c7e6ee;"></div>
<div style="position:absolute;left:21px;top:375px;width:36px;height:16px;background:#c7e6ee;"></div>
<div style="position:absolute;left:57px;top:375px;width:37px;height:16px;background:#c7e6ee;"></div>
<div style="position:absolute;left:94px;top:375px;width:36px;height:16px;background:#c7e6ee;"></div>
<div style="position:absolute;left:130px;top:375px;width:37px;height:16px;background:#c7e6ee;"></div>
<div style="position:absolute;left:167px;top:375px;width:37px;height:16px;background:#c7e6ee;"></div>
<div style="position:absolute;left:204px;top:375px;width:39px;height:16px;background:#c7e6ee;"></div>
<div style="position:absolute;left:-20px;top:391px;width:41px;height:12px;background:#c7e6ee;"></div>
<div style="position:absolute;left:21px;top:391px;width:36px;height:12px;background:#c7e6ee;"></div>
<div style="position:absolute;left:57px;top:391px;width:37px;height:12px;background:#c7e6ee;"></div>
<div style="position:absolute;left:94px;top:391px;width:36px;height:12px;background:#c7e6ee;"></div>
<div style="position:absolute;left:130px;top:391px;width:37px;height:12px;background:#c7e6ee;"></div>
<div style="position:absolute;left:167px;top:391px;width:37px;height:12px;background:#c7e6ee;"></div>
<div style="position:absolute;left:204px;top:391px;width:39px;height:12px;background:#c7e6ee;"></div>
<div style="position:absolute;left:21px;top:229px;width:1px;height:174px;background:#cdd3de;"></div>
<div style="position:absolute;left:57px;top:229px;width:1px;height:174px;background:#cdd3de;"></div>
<div style="position:absolute;left:94px;top:229px;width:1px;height:174px;background:#cdd3de;"></div>
<div style="position:absolute;left:130px;top:229px;width:1px;height:174px;background:#cdd3de;"></div>
<div style="position:absolute;left:167px;top:229px;width:1px;height:174px;background:#cdd3de;"></div>
<div style="position:absolute;left:204px;top:229px;width:1px;height:174px;background:#cdd3de;"></div>
<div style="position:absolute;left:243px;top:229px;width:1px;height:174px;background:#cdd3de;"></div>
<div style="position:absolute;left:0px;top:246px;width:243px;height:1px;background:#cdd3de;"></div>
<div style="position:absolute;left:0px;top:262px;width:243px;height:1px;background:#cdd3de;"></div>
<div style="position:absolute;left:0px;top:278px;width:243px;height:1px;background:#cdd3de;"></div>
<div style="position:absolute;left:0px;top:294px;width:243px;height:1px;background:#cdd3de;"></div>
<div style="position:absolute;left:0px;top:310px;width:243px;height:1px;background:#cdd3de;"></div>
<div style="position:absolute;left:0px;top:326px;width:243px;height:1px;background:#cdd3de;"></div>
<div style="position:absolute;left:0px;top:342px;width:243px;height:1px;background:#cdd3de;"></div>
<div style="position:absolute;left:0px;top:358px;width:243px;height:1px;background:#cdd3de;"></div>
<div style="position:absolute;left:0px;top:374px;width:243px;height:1px;background:#cdd3de;"></div>
<div style="position:absolute;left:0px;top:390px;width:243px;height:1px;background:#cdd3de;"></div>
<div class="t" style="left:-19px;top:230.5px;width:39px;text-align:center;transform-origin:50% 0;transform:scaleX(0.94);color:#3a4152;">Delta</div>
<div class="t" style="left:22px;top:230.5px;width:34px;text-align:center;transform-origin:50% 0;transform:scaleX(0.94);color:#3a4152;">Theta</div>
<div class="t" style="left:58px;top:230.5px;width:35px;text-align:center;transform-origin:50% 0;transform:scaleX(0.94);color:#3a4152;">Vega</div>
<div class="t" style="left:95px;top:230.5px;width:34px;text-align:center;transform-origin:50% 0;transform:scaleX(0.94);color:#3a4152;">Orig...</div>
<div class="t" style="left:131px;top:230.5px;width:35px;text-align:center;transform-origin:50% 0;transform:scaleX(0.94);color:#3a4152;">IVChg</div>
<div class="t" style="left:168px;top:230.5px;width:35px;text-align:center;transform-origin:50% 0;transform:scaleX(0.94);color:#3a4152;">Model</div>
<div class="t" style="left:205px;top:230.5px;width:37px;text-align:center;transform-origin:50% 0;transform:scaleX(0.94);color:#3a4152;">Pos</div>
<div class="t" style="left:-18.2px;top:249.0px;width:37.4px;text-align:right;transform-origin:100% 0;transform:scaleX(0.94);color:#1c1c1c;">17.53</div>
<div class="t" style="left:22.8px;top:249.0px;width:32.4px;text-align:right;transform-origin:100% 0;transform:scaleX(0.94);color:#1c1c1c;">-5.10</div>
<div class="t" style="left:58.8px;top:249.0px;width:33.4px;text-align:right;transform-origin:100% 0;transform:scaleX(0.94);color:#1c1c1c;">14.00</div>
<div class="t" style="left:-18.2px;top:265.0px;width:37.4px;text-align:right;transform-origin:100% 0;transform:scaleX(0.94);color:#1c1c1c;">6.92</div>
<div class="t" style="left:22.8px;top:265.0px;width:32.4px;text-align:right;transform-origin:100% 0;transform:scaleX(0.94);color:#1c1c1c;">-7.06</div>
<div class="t" style="left:58.8px;top:265.0px;width:33.4px;text-align:right;transform-origin:100% 0;transform:scaleX(0.94);color:#1c1c1c;">20.47</div>
<div class="t" style="left:-18.2px;top:281.0px;width:37.4px;text-align:right;transform-origin:100% 0;transform:scaleX(0.94);color:#1c1c1c;">3.88</div>
<div class="t" style="left:22.8px;top:281.0px;width:32.4px;text-align:right;transform-origin:100% 0;transform:scaleX(0.94);color:#1c1c1c;">-6.69</div>
<div class="t" style="left:58.8px;top:281.0px;width:33.4px;text-align:right;transform-origin:100% 0;transform:scaleX(0.94);color:#1c1c1c;">20.32</div>
<div class="t" style="left:-18.2px;top:297.0px;width:37.4px;text-align:right;transform-origin:100% 0;transform:scaleX(0.94);color:#1c1c1c;">6.66</div>
<div class="t" style="left:22.8px;top:297.0px;width:32.4px;text-align:right;transform-origin:100% 0;transform:scaleX(0.94);color:#1c1c1c;">-3.81</div>
<div class="t" style="left:58.8px;top:297.0px;width:33.4px;text-align:right;transform-origin:100% 0;transform:scaleX(0.94);color:#1c1c1c;">11.68</div>
<div class="t" style="left:95.8px;top:297.0px;width:32.4px;text-align:right;transform-origin:100% 0;transform:scaleX(0.94);color:#1c1c1c;">19.00</div>
<div class="t" style="left:131.8px;top:297.0px;width:33.4px;text-align:right;transform-origin:100% 0;transform:scaleX(0.94);color:#1c1c1c;">-67.13</div>
<div class="t" style="left:205.8px;top:297.0px;width:35.4px;text-align:right;transform-origin:100% 0;transform:scaleX(0.94);color:#1c1c1c;">-1</div>
<div class="t" style="left:-18.2px;top:313.0px;width:37.4px;text-align:right;transform-origin:100% 0;transform:scaleX(0.94);color:#1c1c1c;">6.53</div>
<div class="t" style="left:22.8px;top:313.0px;width:32.4px;text-align:right;transform-origin:100% 0;transform:scaleX(0.94);color:#1c1c1c;">-1.49</div>
<div class="t" style="left:58.8px;top:313.0px;width:33.4px;text-align:right;transform-origin:100% 0;transform:scaleX(0.94);color:#1c1c1c;">4.16</div>
<div class="t" style="left:95.8px;top:313.0px;width:32.4px;text-align:right;transform-origin:100% 0;transform:scaleX(0.94);color:#1c1c1c;">27.63</div>
<div class="t" style="left:131.8px;top:313.0px;width:33.4px;text-align:right;transform-origin:100% 0;transform:scaleX(0.94);color:#1c1c1c;">-65.16</div>
<div class="t" style="left:205.8px;top:313.0px;width:35.4px;text-align:right;transform-origin:100% 0;transform:scaleX(0.94);color:#1c1c1c;">+1</div>
<div class="t" style="left:-18.2px;top:329.0px;width:37.4px;text-align:right;transform-origin:100% 0;transform:scaleX(0.94);color:#1c1c1c;">9.99</div>
<div class="t" style="left:22.8px;top:329.0px;width:32.4px;text-align:right;transform-origin:100% 0;transform:scaleX(0.94);color:#1c1c1c;">-19.44</div>
<div class="t" style="left:58.8px;top:329.0px;width:33.4px;text-align:right;transform-origin:100% 0;transform:scaleX(0.94);color:#1c1c1c;">19.80</div>
<div class="t" style="left:-18.2px;top:345.0px;width:37.4px;text-align:right;transform-origin:100% 0;transform:scaleX(0.94);color:#1c1c1c;">9.99</div>
<div class="t" style="left:22.8px;top:345.0px;width:32.4px;text-align:right;transform-origin:100% 0;transform:scaleX(0.94);color:#1c1c1c;">-18.51</div>
<div class="t" style="left:58.8px;top:345.0px;width:33.4px;text-align:right;transform-origin:100% 0;transform:scaleX(0.94);color:#1c1c1c;">18.90</div>
<div class="t" style="left:-18.2px;top:361.0px;width:37.4px;text-align:right;transform-origin:100% 0;transform:scaleX(0.94);color:#1c1c1c;">9.99</div>
<div class="t" style="left:22.8px;top:361.0px;width:32.4px;text-align:right;transform-origin:100% 0;transform:scaleX(0.94);color:#1c1c1c;">-16.00</div>
<div class="t" style="left:58.8px;top:361.0px;width:33.4px;text-align:right;transform-origin:100% 0;transform:scaleX(0.94);color:#1c1c1c;">16.68</div>
<div class="t" style="left:-18.2px;top:377.0px;width:37.4px;text-align:right;transform-origin:100% 0;transform:scaleX(0.94);color:#1c1c1c;">9.99</div>
<div class="t" style="left:22.8px;top:377.0px;width:32.4px;text-align:right;transform-origin:100% 0;transform:scaleX(0.94);color:#1c1c1c;">-0.69</div>
<div class="t" style="left:58.8px;top:377.0px;width:33.4px;text-align:right;transform-origin:100% 0;transform:scaleX(0.94);color:#1c1c1c;">0.88</div>
<div class="t" style="left:-17px;top:393.0px;width:35px;text-align:right;transform-origin:100% 0;transform:scaleX(0.94);color:#1c1c1c;">9.99</div>
<div class="t" style="left:24px;top:393.0px;width:30px;text-align:right;transform-origin:100% 0;transform:scaleX(0.94);color:#1c1c1c;">-8.55</div>
<div class="t" style="left:60px;top:393.0px;width:31px;text-align:right;transform-origin:100% 0;transform:scaleX(0.94);color:#1c1c1c;">9.38</div>
<div style="position:absolute;left:247px;top:210px;width:298px;height:194px;background:#ffffff;border:1px solid #b3bbca;box-sizing:border-box;"></div>
<div style="position:absolute;left:248px;top:211px;width:296px;height:17px;background:#d9dee9;"></div>
<div style="position:absolute;left:248px;top:228px;width:296px;height:1px;background:#c2c9d6;"></div>
<div class="t" style="left:263px;top:214px;transform-origin:0 0;transform:scaleX(1.08);font-weight:bold;color:#111;">Weekly</div>
<div class="t" style="left:233px;top:214px;width:200px;text-align:right;transform-origin:100% 0;transform:scaleX(1.1);font-weight:bold;color:#111;">31 may. 24 (8)</div>
<div class="t" style="left:328px;top:214px;width:200px;text-align:right;transform-origin:100% 0;transform:scaleX(1.16);font-weight:bold;color:#111;">41.72%</div>
<div style="position:absolute;left:248px;top:229px;width:296px;height:18px;background:#f5f7fb;"></div>
<div style="position:absolute;left:248px;top:247px;width:34px;height:16px;background:#a7bfde;"></div>
<div style="position:absolute;left:282px;top:247px;width:34px;height:16px;background:#a7bfde;"></div>
<div style="position:absolute;left:316px;top:247px;width:35px;height:16px;background:#a7bfde;"></div>
<div style="position:absolute;left:351px;top:247px;width:34px;height:16px;background:#a7bfde;"></div>
<div style="position:absolute;left:385px;top:247px;width:35px;height:16px;background:#a7bfde;"></div>
<div style="position:absolute;left:420px;top:247px;width:35px;height:16px;background:#a7bfde;"></div>
<div style="position:absolute;left:455px;top:247px;width:34px;height:16px;background:#a7bfde;"></div>
<div style="position:absolute;left:489px;top:247px;width:40px;height:16px;background:#a7bfde;"></div>
<div style="position:absolute;left:248px;top:263px;width:34px;height:16px;background:#a7bfde;"></div>
<div style="position:absolute;left:282px;top:263px;width:34px;height:16px;background:#a7bfde;"></div>
<div style="position:absolute;left:316px;top:263px;width:35px;height:16px;background:#a7bfde;"></div>
<div style="position:absolute;left:351px;top:263px;width:34px;height:16px;background:#a7bfde;"></div>
<div style="position:absolute;left:385px;top:263px;width:35px;height:16px;background:#a7bfde;"></div>
<div style="position:absolute;left:420px;top:263px;width:35px;height:16px;background:#a7bfde;"></div>
<div style="position:absolute;left:455px;top:263px;width:34px;height:16px;background:#a7bfde;"></div>
<div style="position:absolute;left:489px;top:263px;width:40px;height:16px;background:#a7bfde;"></div>
<div style="position:absolute;left:248px;top:279px;width:34px;height:16px;background:#a7bfde;"></div>
<div style="position:absolute;left:282px;top:279px;width:34px;height:16px;background:#a7bfde;"></div>
<div style="position:absolute;left:316px;top:279px;width:35px;height:16px;background:#a7bfde;"></div>
<div style="position:absolute;left:351px;top:279px;width:34px;height:16px;background:#a7bfde;"></div>
<div style="position:absolute;left:385px;top:279px;width:35px;height:16px;background:#a7bfde;"></div>
<div style="position:absolute;left:420px;top:279px;width:35px;height:16px;background:#a7bfde;"></div>
<div style="position:absolute;left:455px;top:279px;width:34px;height:16px;background:#a7bfde;"></div>
<div style="position:absolute;left:489px;top:279px;width:40px;height:16px;background:#a7bfde;"></div>
<div style="position:absolute;left:248px;top:295px;width:34px;height:16px;background:#a7bfde;"></div>
<div style="position:absolute;left:282px;top:295px;width:34px;height:16px;background:#a7bfde;"></div>
<div style="position:absolute;left:316px;top:295px;width:35px;height:16px;background:#a7bfde;"></div>
<div style="position:absolute;left:351px;top:295px;width:34px;height:16px;background:#a7bfde;"></div>
<div style="position:absolute;left:385px;top:295px;width:35px;height:16px;background:#a7bfde;"></div>
<div style="position:absolute;left:420px;top:295px;width:35px;height:16px;background:#a7bfde;"></div>
<div style="position:absolute;left:455px;top:295px;width:34px;height:16px;background:#a7bfde;"></div>
<div style="position:absolute;left:489px;top:295px;width:40px;height:16px;background:#a7bfde;"></div>
<div style="position:absolute;left:248px;top:311px;width:34px;height:16px;background:#a7bfde;"></div>
<div style="position:absolute;left:282px;top:311px;width:34px;height:16px;background:#a7bfde;"></div>
<div style="position:absolute;left:316px;top:311px;width:35px;height:16px;background:#a7bfde;"></div>
<div style="position:absolute;left:351px;top:311px;width:34px;height:16px;background:#a7bfde;"></div>
<div style="position:absolute;left:385px;top:311px;width:35px;height:16px;background:#a7bfde;"></div>
<div style="position:absolute;left:420px;top:311px;width:35px;height:16px;background:#a7bfde;"></div>
<div style="position:absolute;left:455px;top:311px;width:34px;height:16px;background:#a7bfde;"></div>
<div style="position:absolute;left:489px;top:311px;width:40px;height:16px;background:#a7bfde;"></div>
<div style="position:absolute;left:248px;top:327px;width:34px;height:16px;background:#c7e6ee;"></div>
<div style="position:absolute;left:282px;top:327px;width:34px;height:16px;background:#c7e6ee;"></div>
<div style="position:absolute;left:316px;top:327px;width:35px;height:16px;background:#c7e6ee;"></div>
<div style="position:absolute;left:351px;top:327px;width:34px;height:16px;background:#c7e6ee;"></div>
<div style="position:absolute;left:385px;top:327px;width:35px;height:16px;background:#c7e6ee;"></div>
<div style="position:absolute;left:420px;top:327px;width:35px;height:16px;background:#c7e6ee;"></div>
<div style="position:absolute;left:455px;top:327px;width:34px;height:16px;background:#c7e6ee;"></div>
<div style="position:absolute;left:489px;top:327px;width:40px;height:16px;background:#c7e6ee;"></div>
<div style="position:absolute;left:248px;top:343px;width:34px;height:16px;background:#c7e6ee;"></div>
<div style="position:absolute;left:282px;top:343px;width:34px;height:16px;background:#c7e6ee;"></div>
<div style="position:absolute;left:316px;top:343px;width:35px;height:16px;background:#c7e6ee;"></div>
<div style="position:absolute;left:351px;top:343px;width:34px;height:16px;background:#c7e6ee;"></div>
<div style="position:absolute;left:385px;top:343px;width:35px;height:16px;background:#c7e6ee;"></div>
<div style="position:absolute;left:420px;top:343px;width:35px;height:16px;background:#c7e6ee;"></div>
<div style="position:absolute;left:455px;top:343px;width:34px;height:16px;background:#c7e6ee;"></div>
<div style="position:absolute;left:489px;top:343px;width:40px;height:16px;background:#c7e6ee;"></div>
<div style="position:absolute;left:248px;top:359px;width:34px;height:16px;background:#ffffff;"></div>
<div style="position:absolute;left:282px;top:359px;width:34px;height:16px;background:#ffffff;"></div>
<div style="position:absolute;left:316px;top:359px;width:35px;height:16px;background:#ffffff;"></div>
<div style="position:absolute;left:351px;top:359px;width:34px;height:16px;background:#ffffff;"></div>
<div style="position:absolute;left:385px;top:359px;width:35px;height:16px;background:#ffffff;"></div>
<div style="position:absolute;left:420px;top:359px;width:35px;height:16px;background:#ffffff;"></div>
<div style="position:absolute;left:455px;top:359px;width:34px;height:16px;background:#ffffff;"></div>
<div style="position:absolute;left:489px;top:359px;width:40px;height:16px;background:#ffffff;"></div>
<div style="position:absolute;left:248px;top:375px;width:34px;height:16px;background:#ffffff;"></div>
<div style="position:absolute;left:282px;top:375px;width:34px;height:16px;background:#ffffff;"></div>
<div style="position:absolute;left:316px;top:375px;width:35px;height:16px;background:#ffffff;"></div>
<div style="position:absolute;left:351px;top:375px;width:34px;height:16px;background:#ffffff;"></div>
<div style="position:absolute;left:385px;top:375px;width:35px;height:16px;background:#ffffff;"></div>
<div style="position:absolute;left:420px;top:375px;width:35px;height:16px;background:#ffffff;"></div>
<div style="position:absolute;left:455px;top:375px;width:34px;height:16px;background:#ffffff;"></div>
<div style="position:absolute;left:489px;top:375px;width:40px;height:16px;background:#ffffff;"></div>
<div style="position:absolute;left:248px;top:391px;width:34px;height:12px;background:#ffffff;"></div>
<div style="position:absolute;left:282px;top:391px;width:34px;height:12px;background:#ffffff;"></div>
<div style="position:absolute;left:316px;top:391px;width:35px;height:12px;background:#ffffff;"></div>
<div style="position:absolute;left:351px;top:391px;width:34px;height:12px;background:#ffffff;"></div>
<div style="position:absolute;left:385px;top:391px;width:35px;height:12px;background:#ffffff;"></div>
<div style="position:absolute;left:420px;top:391px;width:35px;height:12px;background:#ffffff;"></div>
<div style="position:absolute;left:455px;top:391px;width:34px;height:12px;background:#ffffff;"></div>
<div style="position:absolute;left:489px;top:391px;width:40px;height:12px;background:#ffffff;"></div>
<div style="position:absolute;left:282px;top:229px;width:1px;height:174px;background:#cdd3de;"></div>
<div style="position:absolute;left:316px;top:229px;width:1px;height:174px;background:#cdd3de;"></div>
<div style="position:absolute;left:351px;top:229px;width:1px;height:174px;background:#cdd3de;"></div>
<div style="position:absolute;left:385px;top:229px;width:1px;height:174px;background:#cdd3de;"></div>
<div style="position:absolute;left:420px;top:229px;width:1px;height:174px;background:#cdd3de;"></div>
<div style="position:absolute;left:455px;top:229px;width:1px;height:174px;background:#cdd3de;"></div>
<div style="position:absolute;left:489px;top:229px;width:1px;height:174px;background:#cdd3de;"></div>
<div style="position:absolute;left:529px;top:229px;width:1px;height:174px;background:#cdd3de;"></div>
<div style="position:absolute;left:248px;top:246px;width:281px;height:1px;background:#cdd3de;"></div>
<div style="position:absolute;left:248px;top:262px;width:281px;height:1px;background:#cdd3de;"></div>
<div style="position:absolute;left:248px;top:278px;width:281px;height:1px;background:#cdd3de;"></div>
<div style="position:absolute;left:248px;top:294px;width:281px;height:1px;background:#cdd3de;"></div>
<div style="position:absolute;left:248px;top:310px;width:281px;height:1px;background:#cdd3de;"></div>
<div style="position:absolute;left:248px;top:326px;width:281px;height:1px;background:#cdd3de;"></div>
<div style="position:absolute;left:248px;top:342px;width:281px;height:1px;background:#cdd3de;"></div>
<div style="position:absolute;left:248px;top:358px;width:281px;height:1px;background:#cdd3de;"></div>
<div style="position:absolute;left:248px;top:374px;width:281px;height:1px;background:#cdd3de;"></div>
<div style="position:absolute;left:248px;top:390px;width:281px;height:1px;background:#cdd3de;"></div>
<div class="t" style="left:249px;top:230.5px;width:32px;text-align:center;transform-origin:50% 0;transform:scaleX(0.94);color:#3a4152;">Mid</div>
<div class="t" style="left:283px;top:230.5px;width:32px;text-align:center;transform-origin:50% 0;transform:scaleX(0.94);color:#3a4152;">Delta</div>
<div class="t" style="left:317px;top:230.5px;width:33px;text-align:center;transform-origin:50% 0;transform:scaleX(0.94);color:#3a4152;">Theta</div>
<div class="t" style="left:352px;top:230.5px;width:32px;text-align:center;transform-origin:50% 0;transform:scaleX(0.94);color:#3a4152;">Vega</div>
<div class="t" style="left:386px;top:230.5px;width:33px;text-align:center;transform-origin:50% 0;transform:scaleX(0.94);color:#3a4152;">Orig...</div>
<div class="t" style="left:421px;top:230.5px;width:33px;text-align:center;transform-origin:50% 0;transform:scaleX(0.94);color:#3a4152;">IVChg</div>
<div class="t" style="left:456px;top:230.5px;width:32px;text-align:center;transform-origin:50% 0;transform:scaleX(0.94);color:#3a4152;">Model</div>
<div class="t" style="left:490px;top:230.5px;width:38px;text-align:center;transform-origin:50% 0;transform:scaleX(0.94);color:#3a4152;">Pos</div>
<div class="t" style="left:249.8px;top:249.0px;width:30.4px;text-align:right;transform-origin:100% 0;transform:scaleX(0.94);color:#2e9a2e;">12.00</div>
<div class="t" style="left:283.8px;top:249.0px;width:30.4px;text-align:right;transform-origin:100% 0;transform:scaleX(0.94);color:#1c1c1c;">29.92</div>
<div class="t" style="left:317.8px;top:249.0px;width:31.4px;text-align:right;transform-origin:100% 0;transform:scaleX(0.94);color:#1c1c1c;">-1.46</div>
<div class="t" style="left:352.8px;top:249.0px;width:30.4px;text-align:right;transform-origin:100% 0;transform:scaleX(0.94);color:#1c1c1c;">53.28</div>
<div class="t" style="left:249.8px;top:265.0px;width:30.4px;text-align:right;transform-origin:100% 0;transform:scaleX(0.94);color:#2e9a2e;">20.10</div>
<div class="t" style="left:283.8px;top:265.0px;width:30.4px;text-align:right;transform-origin:100% 0;transform:scaleX(0.94);color:#1c1c1c;">43.74</div>
<div class="t" style="left:317.8px;top:265.0px;width:31.4px;text-align:right;transform-origin:100% 0;transform:scaleX(0.94);color:#1c1c1c;">-1.64</div>
<div class="t" style="left:352.8px;top:265.0px;width:30.4px;text-align:right;transform-origin:100% 0;transform:scaleX(0.94);color:#1c1c1c;">60.45</div>
<div class="t" style="left:249.8px;top:281.0px;width:30.4px;text-align:right;transform-origin:100% 0;transform:scaleX(0.94);color:#2e9a2e;">31.90</div>
<div class="t" style="left:283.8px;top:281.0px;width:30.4px;text-align:right;transform-origin:100% 0;transform:scaleX(0.94);color:#1c1c1c;">59.30</div>
<div class="t" style="left:317.8px;top:281.0px;width:31.4px;text-align:right;transform-origin:100% 0;transform:scaleX(0.94);color:#1c1c1c;">-1.61</div>
<div class="t" style="left:352.8px;top:281.0px;width:30.4px;text-align:right;transform-origin:100% 0;transform:scaleX(0.94);color:#1c1c1c;">59.54</div>
<div class="t" style="left:249.8px;top:297.0px;width:30.4px;text-align:right;transform-origin:100% 0;transform:scaleX(0.94);color:#2e9a2e;">47.8...</div>
<div class="t" style="left:283.8px;top:297.0px;width:30.4px;text-align:right;transform-origin:100% 0;transform:scaleX(0.94);color:#1c1c1c;">74.08</div>
<div class="t" style="left:317.8px;top:297.0px;width:31.4px;text-align:right;transform-origin:100% 0;transform:scaleX(0.94);color:#1c1c1c;">-1.36</div>
<div class="t" style="left:352.8px;top:297.0px;width:30.4px;text-align:right;transform-origin:100% 0;transform:scaleX(0.94);color:#1c1c1c;">49.68</div>
<div class="t" style="left:249.8px;top:313.0px;width:30.4px;text-align:right;transform-origin:100% 0;transform:scaleX(0.94);color:#2e9a2e;">67.1...</div>
<div class="t" style="left:283.8px;top:313.0px;width:30.4px;text-align:right;transform-origin:100% 0;transform:scaleX(0.94);color:#1c1c1c;">86.17</div>
<div class="t" style="left:317.8px;top:313.0px;width:31.4px;text-align:right;transform-origin:100% 0;transform:scaleX(0.94);color:#1c1c1c;">-0.96</div>
<div class="t" style="left:352.8px;top:313.0px;width:30.4px;text-align:right;transform-origin:100% 0;transform:scaleX(0.94);color:#1c1c1c;">33.87</div>
<div class="t" style="left:249.8px;top:329.0px;width:30.4px;text-align:right;transform-origin:100% 0;transform:scaleX(0.94);color:#2e9a2e;">89.1...</div>
<div class="t" style="left:283.8px;top:329.0px;width:30.4px;text-align:right;transform-origin:100% 0;transform:scaleX(0.94);color:#1c1c1c;">94.38</div>
<div class="t" style="left:317.8px;top:329.0px;width:31.4px;text-align:right;transform-origin:100% 0;transform:scaleX(0.94);color:#1c1c1c;">-0.54</div>
<div class="t" style="left:352.8px;top:329.0px;width:30.4px;text-align:right;transform-origin:100% 0;transform:scaleX(0.94);color:#1c1c1c;">17.37</div>
<div class="t" style="left:249.8px;top:345.0px;width:30.4px;text-align:right;transform-origin:100% 0;transform:scaleX(0.94);color:#2e9a2e;">112....</div>
<div class="t" style="left:283.8px;top:345.0px;width:30.4px;text-align:right;transform-origin:100% 0;transform:scaleX(0.94);color:#1c1c1c;">99.99</div>
<div class="t" style="left:317.8px;top:345.0px;width:31.4px;text-align:right;transform-origin:100% 0;transform:scaleX(0.94);color:#1c1c1c;">-0.24</div>
<div class="t" style="left:352.8px;top:345.0px;width:30.4px;text-align:right;transform-origin:100% 0;transform:scaleX(0.94);color:#1c1c1c;">5.38</div>
<div class="t" style="left:249.8px;top:361.0px;width:30.4px;text-align:right;transform-origin:100% 0;transform:scaleX(0.94);color:#ee2a2a;">137....</div>
<div class="t" style="left:283.8px;top:361.0px;width:30.4px;text-align:right;transform-origin:100% 0;transform:scaleX(0.94);color:#1c1c1c;">99.99</div>
<div class="t" style="left:317.8px;top:361.0px;width:31.4px;text-align:right;transform-origin:100% 0;transform:scaleX(0.94);color:#1c1c1c;">-0.25</div>
<div class="t" style="left:352.8px;top:361.0px;width:30.4px;text-align:right;transform-origin:100% 0;transform:scaleX(0.94);color:#1c1c1c;">4.72</div>
<div class="t" style="left:249.8px;top:377.0px;width:30.4px;text-align:right;transform-origin:100% 0;transform:scaleX(0.94);color:#2e9a2e;">161....</div>
<div class="t" style="left:283.8px;top:377.0px;width:30.4px;text-align:right;transform-origin:100% 0;transform:scaleX(0.94);color:#1c1c1c;">99.99</div>
<div class="t" style="left:317.8px;top:377.0px;width:31.4px;text-align:right;transform-origin:100% 0;transform:scaleX(0.94);color:#1c1c1c;">-0.20</div>
<div class="t" style="left:352.8px;top:377.0px;width:30.4px;text-align:right;transform-origin:100% 0;transform:scaleX(0.94);color:#1c1c1c;">2.69</div>
<div style="position:absolute;left:529px;top:229px;width:15px;height:17px;background:#f5f7fb;"></div>
<div style="position:absolute;left:529px;top:246px;width:15px;height:1px;background:#cdd3de;"></div>
<div style="position:absolute;left:529px;top:229px;width:1px;height:18px;background:#cdd3de;"></div>
<div style="position:absolute;left:529px;top:247px;width:15px;height:156px;background:#dde1ea;"></div>
<div style="position:absolute;left:533px;top:300px;width:8px;height:19px;background:#a0a8b8;"></div>
<svg style="position:absolute;left:533px;top:252px" width="8" height="5"><path d="M0 4 L3.5 0.5 L7 4 Z" fill="#5a6070"/></svg>
<svg style="position:absolute;left:533px;top:394px" width="8" height="5"><path d="M0 0.5 L3.5 4 L7 0.5 Z" fill="#5a6070"/></svg>
<div class="t" style="left:251px;top:393.0px;width:28px;text-align:right;transform-origin:100% 0;transform:scaleX(0.94);color:#2e9a2e;">106....</div>
<div class="t" style="left:285px;top:393.0px;width:28px;text-align:right;transform-origin:100% 0;transform:scaleX(0.94);color:#1c1c1c;">99.99</div>
<div class="t" style="left:319px;top:393.0px;width:29px;text-align:right;transform-origin:100% 0;transform:scaleX(0.94);color:#1c1c1c;">-1.30</div>
<div class="t" style="left:354px;top:393.0px;width:28px;text-align:right;transform-origin:100% 0;transform:scaleX(0.94);color:#1c1c1c;">28.36</div>
<div style="position:absolute;left:-1px;top:415px;width:246px;height:182px;background:#ffffff;border:1px solid #b3bbca;box-sizing:border-box;"></div>
<div style="position:absolute;left:0px;top:416px;width:244px;height:17px;background:#f5f7fb;"></div>
<div style="position:absolute;left:-20px;top:433px;width:41px;height:16px;background:#a7bfde;"></div>
<div style="position:absolute;left:21px;top:433px;width:36px;height:16px;background:#a7bfde;"></div>
<div style="position:absolute;left:57px;top:433px;width:37px;height:16px;background:#a7bfde;"></div>
<div style="position:absolute;left:94px;top:433px;width:36px;height:16px;background:#a7bfde;"></div>
<div style="position:absolute;left:130px;top:433px;width:37px;height:16px;background:#a7bfde;"></div>
<div style="position:absolute;left:167px;top:433px;width:37px;height:16px;background:#a7bfde;"></div>
<div style="position:absolute;left:204px;top:433px;width:39px;height:16px;background:#a7bfde;"></div>
<div style="position:absolute;left:-20px;top:449px;width:41px;height:16px;background:#a7bfde;"></div>
<div style="position:absolute;left:21px;top:449px;width:36px;height:16px;background:#a7bfde;"></div>
<div style="position:absolute;left:57px;top:449px;width:37px;height:16px;background:#a7bfde;"></div>
<div style="position:absolute;left:94px;top:449px;width:36px;height:16px;background:#a7bfde;"></div>
<div style="position:absolute;left:130px;top:449px;width:37px;height:16px;background:#a7bfde;"></div>
<div style="position:absolute;left:167px;top:449px;width:37px;height:16px;background:#a7bfde;"></div>
<div style="position:absolute;left:204px;top:449px;width:39px;height:16px;background:#a7bfde;"></div>
<div style="position:absolute;left:-20px;top:465px;width:41px;height:16px;background:#a7bfde;"></div>
<div style="position:absolute;left:21px;top:465px;width:36px;height:16px;background:#a7bfde;"></div>
<div style="position:absolute;left:57px;top:465px;width:37px;height:16px;background:#a7bfde;"></div>
<div style="position:absolute;left:94px;top:465px;width:36px;height:16px;background:#a7bfde;"></div>
<div style="position:absolute;left:130px;top:465px;width:37px;height:16px;background:#a7bfde;"></div>
<div style="position:absolute;left:167px;top:465px;width:37px;height:16px;background:#a7bfde;"></div>
<div style="position:absolute;left:204px;top:465px;width:39px;height:16px;background:#a7bfde;"></div>
<div style="position:absolute;left:-20px;top:481px;width:41px;height:16px;background:#a7bfde;"></div>
<div style="position:absolute;left:21px;top:481px;width:36px;height:16px;background:#a7bfde;"></div>
<div style="position:absolute;left:57px;top:481px;width:37px;height:16px;background:#a7bfde;"></div>
<div style="position:absolute;left:94px;top:481px;width:36px;height:16px;background:#a7bfde;"></div>
<div style="position:absolute;left:130px;top:481px;width:37px;height:16px;background:#a7bfde;"></div>
<div style="position:absolute;left:167px;top:481px;width:37px;height:16px;background:#a7bfde;"></div>
<div style="position:absolute;left:204px;top:481px;width:39px;height:16px;background:#a7bfde;"></div>
<div style="position:absolute;left:-20px;top:497px;width:41px;height:16px;background:#a7bfde;"></div>
<div style="position:absolute;left:21px;top:497px;width:36px;height:16px;background:#a7bfde;"></div>
<div style="position:absolute;left:57px;top:497px;width:37px;height:16px;background:#a7bfde;"></div>
<div style="position:absolute;left:94px;top:497px;width:36px;height:16px;background:#a7bfde;"></div>
<div style="position:absolute;left:130px;top:497px;width:37px;height:16px;background:#a7bfde;"></div>
<div style="position:absolute;left:167px;top:497px;width:37px;height:16px;background:#a7bfde;"></div>
<div style="position:absolute;left:204px;top:497px;width:39px;height:16px;background:#a7bfde;"></div>
<div style="position:absolute;left:-20px;top:513px;width:41px;height:16px;background:#a7bfde;"></div>
<div style="position:absolute;left:21px;top:513px;width:36px;height:16px;background:#a7bfde;"></div>
<div style="position:absolute;left:57px;top:513px;width:37px;height:16px;background:#a7bfde;"></div>
<div style="position:absolute;left:94px;top:513px;width:36px;height:16px;background:#a7bfde;"></div>
<div style="position:absolute;left:130px;top:513px;width:37px;height:16px;background:#a7bfde;"></div>
<div style="position:absolute;left:167px;top:513px;width:37px;height:16px;background:#a7bfde;"></div>
<div style="position:absolute;left:204px;top:513px;width:39px;height:16px;background:#a7bfde;"></div>
<div style="position:absolute;left:-20px;top:529px;width:41px;height:16px;background:#a7bfde;"></div>
<div style="position:absolute;left:21px;top:529px;width:36px;height:16px;background:#a7bfde;"></div>
<div style="position:absolute;left:57px;top:529px;width:37px;height:16px;background:#a7bfde;"></div>
<div style="position:absolute;left:94px;top:529px;width:36px;height:16px;background:#a7bfde;"></div>
<div style="position:absolute;left:130px;top:529px;width:37px;height:16px;background:#a7bfde;"></div>
<div style="position:absolute;left:167px;top:529px;width:37px;height:16px;background:#a7bfde;"></div>
<div style="position:absolute;left:204px;top:529px;width:39px;height:16px;background:#a7bfde;"></div>
<div style="position:absolute;left:-20px;top:545px;width:41px;height:16px;background:#c7e6ee;"></div>
<div style="position:absolute;left:21px;top:545px;width:36px;height:16px;background:#c7e6ee;"></div>
<div style="position:absolute;left:57px;top:545px;width:37px;height:16px;background:#c7e6ee;"></div>
<div style="position:absolute;left:94px;top:545px;width:36px;height:16px;background:#c7e6ee;"></div>
<div style="position:absolute;left:130px;top:545px;width:37px;height:16px;background:#c7e6ee;"></div>
<div style="position:absolute;left:167px;top:545px;width:37px;height:16px;background:#c7e6ee;"></div>
<div style="position:absolute;left:204px;top:545px;width:39px;height:16px;background:#c7e6ee;"></div>
<div style="position:absolute;left:-20px;top:561px;width:41px;height:16px;background:#c7e6ee;"></div>
<div style="position:absolute;left:21px;top:561px;width:36px;height:16px;background:#c7e6ee;"></div>
<div style="position:absolute;left:57px;top:561px;width:37px;height:16px;background:#c7e6ee;"></div>
<div style="position:absolute;left:94px;top:561px;width:36px;height:16px;background:#c7e6ee;"></div>
<div style="position:absolute;left:130px;top:561px;width:37px;height:16px;background:#c7e6ee;"></div>
<div style="position:absolute;left:167px;top:561px;width:37px;height:16px;background:#c7e6ee;"></div>
<div style="position:absolute;left:204px;top:561px;width:39px;height:16px;background:#c7e6ee;"></div>
<div style="position:absolute;left:-20px;top:577px;width:41px;height:16px;background:#c7e6ee;"></div>
<div style="position:absolute;left:21px;top:577px;width:36px;height:16px;background:#c7e6ee;"></div>
<div style="position:absolute;left:57px;top:577px;width:37px;height:16px;background:#c7e6ee;"></div>
<div style="position:absolute;left:94px;top:577px;width:36px;height:16px;background:#c7e6ee;"></div>
<div style="position:absolute;left:130px;top:577px;width:37px;height:16px;background:#c7e6ee;"></div>
<div style="position:absolute;left:167px;top:577px;width:37px;height:16px;background:#c7e6ee;"></div>
<div style="position:absolute;left:204px;top:577px;width:39px;height:16px;background:#c7e6ee;"></div>
<div style="position:absolute;left:-20px;top:593px;width:41px;height:3px;background:#c7e6ee;"></div>
<div style="position:absolute;left:21px;top:593px;width:36px;height:3px;background:#c7e6ee;"></div>
<div style="position:absolute;left:57px;top:593px;width:37px;height:3px;background:#c7e6ee;"></div>
<div style="position:absolute;left:94px;top:593px;width:36px;height:3px;background:#c7e6ee;"></div>
<div style="position:absolute;left:130px;top:593px;width:37px;height:3px;background:#c7e6ee;"></div>
<div style="position:absolute;left:167px;top:593px;width:37px;height:3px;background:#c7e6ee;"></div>
<div style="position:absolute;left:204px;top:593px;width:39px;height:3px;background:#c7e6ee;"></div>
<div style="position:absolute;left:21px;top:416px;width:1px;height:180px;background:#cdd3de;"></div>
<div style="position:absolute;left:57px;top:416px;width:1px;height:180px;background:#cdd3de;"></div>
<div style="position:absolute;left:94px;top:416px;width:1px;height:180px;background:#cdd3de;"></div>
<div style="position:absolute;left:130px;top:416px;width:1px;height:180px;background:#cdd3de;"></div>
<div style="position:absolute;left:167px;top:416px;width:1px;height:180px;background:#cdd3de;"></div>
<div style="position:absolute;left:204px;top:416px;width:1px;height:180px;background:#cdd3de;"></div>
<div style="position:absolute;left:243px;top:416px;width:1px;height:180px;background:#cdd3de;"></div>
<div style="position:absolute;left:0px;top:432px;width:243px;height:1px;background:#cdd3de;"></div>
<div style="position:absolute;left:0px;top:448px;width:243px;height:1px;background:#cdd3de;"></div>
<div style="position:absolute;left:0px;top:464px;width:243px;height:1px;background:#cdd3de;"></div>
<div style="position:absolute;left:0px;top:480px;width:243px;height:1px;background:#cdd3de;"></div>
<div style="position:absolute;left:0px;top:496px;width:243px;height:1px;background:#cdd3de;"></div>
<div style="position:absolute;left:0px;top:512px;width:243px;height:1px;background:#cdd3de;"></div>
<div style="position:absolute;left:0px;top:528px;width:243px;height:1px;background:#cdd3de;"></div>
<div style="position:absolute;left:0px;top:544px;width:243px;height:1px;background:#cdd3de;"></div>
<div style="position:absolute;left:0px;top:560px;width:243px;height:1px;background:#cdd3de;"></div>
<div style="position:absolute;left:0px;top:576px;width:243px;height:1px;background:#cdd3de;"></div>
<div style="position:absolute;left:0px;top:592px;width:243px;height:1px;background:#cdd3de;"></div>
<div class="t" style="left:-19px;top:417.0px;width:39px;text-align:center;transform-origin:50% 0;transform:scaleX(0.94);color:#3a4152;">Delta</div>
<div class="t" style="left:22px;top:417.0px;width:34px;text-align:center;transform-origin:50% 0;transform:scaleX(0.94);color:#3a4152;">Theta</div>
<div class="t" style="left:58px;top:417.0px;width:35px;text-align:center;transform-origin:50% 0;transform:scaleX(0.94);color:#3a4152;">Vega</div>
<div class="t" style="left:95px;top:417.0px;width:34px;text-align:center;transform-origin:50% 0;transform:scaleX(0.94);color:#3a4152;">Orig...</div>
<div class="t" style="left:131px;top:417.0px;width:35px;text-align:center;transform-origin:50% 0;transform:scaleX(0.94);color:#3a4152;">IVChg</div>
<div class="t" style="left:168px;top:417.0px;width:35px;text-align:center;transform-origin:50% 0;transform:scaleX(0.94);color:#3a4152;">Model</div>
<div class="t" style="left:205px;top:417.0px;width:37px;text-align:center;transform-origin:50% 0;transform:scaleX(0.94);color:#3a4152;">Pos</div>
<div class="t" style="left:-18.2px;top:435.0px;width:37.4px;text-align:right;transform-origin:100% 0;transform:scaleX(0.94);color:#1c1c1c;">1.82</div>
<div class="t" style="left:22.8px;top:435.0px;width:32.4px;text-align:right;transform-origin:100% 0;transform:scaleX(0.94);color:#1c1c1c;">-5.21</div>
<div class="t" style="left:58.8px;top:435.0px;width:33.4px;text-align:right;transform-origin:100% 0;transform:scaleX(0.94);color:#1c1c1c;">14.32</div>
<div class="t" style="left:-18.2px;top:451.0px;width:37.4px;text-align:right;transform-origin:100% 0;transform:scaleX(0.94);color:#1c1c1c;">2.82</div>
<div class="t" style="left:22.8px;top:451.0px;width:32.4px;text-align:right;transform-origin:100% 0;transform:scaleX(0.94);color:#1c1c1c;">-7.07</div>
<div class="t" style="left:58.8px;top:451.0px;width:33.4px;text-align:right;transform-origin:100% 0;transform:scaleX(0.94);color:#1c1c1c;">20.51</div>
<div class="t" style="left:-18.2px;top:467.0px;width:37.4px;text-align:right;transform-origin:100% 0;transform:scaleX(0.94);color:#1c1c1c;">5.36</div>
<div class="t" style="left:22.8px;top:467.0px;width:32.4px;text-align:right;transform-origin:100% 0;transform:scaleX(0.94);color:#1c1c1c;">-6.69</div>
<div class="t" style="left:58.8px;top:467.0px;width:33.4px;text-align:right;transform-origin:100% 0;transform:scaleX(0.94);color:#1c1c1c;">20.36</div>
<div class="t" style="left:-18.2px;top:483.0px;width:37.4px;text-align:right;transform-origin:100% 0;transform:scaleX(0.94);color:#1c1c1c;">4.19</div>
<div class="t" style="left:22.8px;top:483.0px;width:32.4px;text-align:right;transform-origin:100% 0;transform:scaleX(0.94);color:#1c1c1c;">-3.98</div>
<div class="t" style="left:58.8px;top:483.0px;width:33.4px;text-align:right;transform-origin:100% 0;transform:scaleX(0.94);color:#1c1c1c;">12.19</div>
<div class="t" style="left:-18.2px;top:499.0px;width:37.4px;text-align:right;transform-origin:100% 0;transform:scaleX(0.94);color:#1c1c1c;">4.79</div>
<div class="t" style="left:22.8px;top:499.0px;width:32.4px;text-align:right;transform-origin:100% 0;transform:scaleX(0.94);color:#1c1c1c;">-1.92</div>
<div class="t" style="left:58.8px;top:499.0px;width:33.4px;text-align:right;transform-origin:100% 0;transform:scaleX(0.94);color:#1c1c1c;">5.40</div>
<div class="t" style="left:-18.2px;top:515.0px;width:37.4px;text-align:right;transform-origin:100% 0;transform:scaleX(0.94);color:#1c1c1c;">1.97</div>
<div class="t" style="left:22.8px;top:515.0px;width:32.4px;text-align:right;transform-origin:100% 0;transform:scaleX(0.94);color:#1c1c1c;">-1.06</div>
<div class="t" style="left:58.8px;top:515.0px;width:33.4px;text-align:right;transform-origin:100% 0;transform:scaleX(0.94);color:#1c1c1c;">2.59</div>
<div class="t" style="left:-18.2px;top:531.0px;width:37.4px;text-align:right;transform-origin:100% 0;transform:scaleX(0.94);color:#1c1c1c;">1.08</div>
<div class="t" style="left:22.8px;top:531.0px;width:32.4px;text-align:right;transform-origin:100% 0;transform:scaleX(0.94);color:#1c1c1c;">-0.74</div>
<div class="t" style="left:58.8px;top:531.0px;width:33.4px;text-align:right;transform-origin:100% 0;transform:scaleX(0.94);color:#1c1c1c;">1.55</div>
<div class="t" style="left:95.8px;top:531.0px;width:32.4px;text-align:right;transform-origin:100% 0;transform:scaleX(0.94);color:#1c1c1c;">26.83</div>
<div class="t" style="left:131.8px;top:531.0px;width:33.4px;text-align:right;transform-origin:100% 0;transform:scaleX(0.94);color:#1c1c1c;">-47.72</div>
<div class="t" style="left:205.8px;top:531.0px;width:35.4px;text-align:right;transform-origin:100% 0;transform:scaleX(0.94);color:#1c1c1c;">+1</div>
<div class="t" style="left:-18.2px;top:547.0px;width:37.4px;text-align:right;transform-origin:100% 0;transform:scaleX(0.94);color:#1c1c1c;">0.68</div>
<div class="t" style="left:22.8px;top:547.0px;width:32.4px;text-align:right;transform-origin:100% 0;transform:scaleX(0.94);color:#1c1c1c;">-0.57</div>
<div class="t" style="left:58.8px;top:547.0px;width:33.4px;text-align:right;transform-origin:100% 0;transform:scaleX(0.94);color:#1c1c1c;">1.03</div>
<div class="t" style="left:95.8px;top:547.0px;width:32.4px;text-align:right;transform-origin:100% 0;transform:scaleX(0.94);color:#1c1c1c;">17.10</div>
<div class="t" style="left:131.8px;top:547.0px;width:33.4px;text-align:right;transform-origin:100% 0;transform:scaleX(0.94);color:#1c1c1c;">-28.98</div>
<div class="t" style="left:205.8px;top:547.0px;width:35.4px;text-align:right;transform-origin:100% 0;transform:scaleX(0.94);color:#1c1c1c;">-1</div>
<div class="t" style="left:-18.2px;top:563.0px;width:37.4px;text-align:right;transform-origin:100% 0;transform:scaleX(0.94);color:#1c1c1c;">0.49</div>
<div class="t" style="left:22.8px;top:563.0px;width:32.4px;text-align:right;transform-origin:100% 0;transform:scaleX(0.94);color:#1c1c1c;">-0.49</div>
<div class="t" style="left:58.8px;top:563.0px;width:33.4px;text-align:right;transform-origin:100% 0;transform:scaleX(0.94);color:#1c1c1c;">0.78</div>
<div class="t" style="left:-18.2px;top:579.0px;width:37.4px;text-align:right;transform-origin:100% 0;transform:scaleX(0.94);color:#1c1c1c;">0.35</div>
<div class="t" style="left:22.8px;top:579.0px;width:32.4px;text-align:right;transform-origin:100% 0;transform:scaleX(0.94);color:#1c1c1c;">-0.41</div>
<div class="t" style="left:58.8px;top:579.0px;width:33.4px;text-align:right;transform-origin:100% 0;transform:scaleX(0.94);color:#1c1c1c;">0.57</div>
<div style="position:absolute;left:247px;top:415px;width:298px;height:182px;background:#ffffff;border:1px solid #b3bbca;box-sizing:border-box;"></div>
<div style="position:absolute;left:248px;top:416px;width:296px;height:17px;background:#f5f7fb;"></div>
<div style="position:absolute;left:248px;top:433px;width:34px;height:16px;background:#a7bfde;"></div>
<div style="position:absolute;left:282px;top:433px;width:34px;height:16px;background:#a7bfde;"></div>
<div style="position:absolute;left:316px;top:433px;width:35px;height:16px;background:#a7bfde;"></div>
<div style="position:absolute;left:351px;top:433px;width:34px;height:16px;background:#a7bfde;"></div>
<div style="position:absolute;left:385px;top:433px;width:35px;height:16px;background:#a7bfde;"></div>
<div style="position:absolute;left:420px;top:433px;width:35px;height:16px;background:#a7bfde;"></div>
<div style="position:absolute;left:455px;top:433px;width:34px;height:16px;background:#a7bfde;"></div>
<div style="position:absolute;left:489px;top:433px;width:40px;height:16px;background:#a7bfde;"></div>
<div style="position:absolute;left:248px;top:449px;width:34px;height:16px;background:#a7bfde;"></div>
<div style="position:absolute;left:282px;top:449px;width:34px;height:16px;background:#a7bfde;"></div>
<div style="position:absolute;left:316px;top:449px;width:35px;height:16px;background:#a7bfde;"></div>
<div style="position:absolute;left:351px;top:449px;width:34px;height:16px;background:#a7bfde;"></div>
<div style="position:absolute;left:385px;top:449px;width:35px;height:16px;background:#a7bfde;"></div>
<div style="position:absolute;left:420px;top:449px;width:35px;height:16px;background:#a7bfde;"></div>
<div style="position:absolute;left:455px;top:449px;width:34px;height:16px;background:#a7bfde;"></div>
<div style="position:absolute;left:489px;top:449px;width:40px;height:16px;background:#a7bfde;"></div>
<div style="position:absolute;left:248px;top:465px;width:34px;height:16px;background:#a7bfde;"></div>
<div style="position:absolute;left:282px;top:465px;width:34px;height:16px;background:#a7bfde;"></div>
<div style="position:absolute;left:316px;top:465px;width:35px;height:16px;background:#a7bfde;"></div>
<div style="position:absolute;left:351px;top:465px;width:34px;height:16px;background:#a7bfde;"></div>
<div style="position:absolute;left:385px;top:465px;width:35px;height:16px;background:#a7bfde;"></div>
<div style="position:absolute;left:420px;top:465px;width:35px;height:16px;background:#a7bfde;"></div>
<div style="position:absolute;left:455px;top:465px;width:34px;height:16px;background:#a7bfde;"></div>
<div style="position:absolute;left:489px;top:465px;width:40px;height:16px;background:#a7bfde;"></div>
<div style="position:absolute;left:248px;top:481px;width:34px;height:16px;background:#a7bfde;"></div>
<div style="position:absolute;left:282px;top:481px;width:34px;height:16px;background:#a7bfde;"></div>
<div style="position:absolute;left:316px;top:481px;width:35px;height:16px;background:#a7bfde;"></div>
<div style="position:absolute;left:351px;top:481px;width:34px;height:16px;background:#a7bfde;"></div>
<div style="position:absolute;left:385px;top:481px;width:35px;height:16px;background:#a7bfde;"></div>
<div style="position:absolute;left:420px;top:481px;width:35px;height:16px;background:#a7bfde;"></div>
<div style="position:absolute;left:455px;top:481px;width:34px;height:16px;background:#a7bfde;"></div>
<div style="position:absolute;left:489px;top:481px;width:40px;height:16px;background:#a7bfde;"></div>
<div style="position:absolute;left:248px;top:497px;width:34px;height:16px;background:#a7bfde;"></div>
<div style="position:absolute;left:282px;top:497px;width:34px;height:16px;background:#a7bfde;"></div>
<div style="position:absolute;left:316px;top:497px;width:35px;height:16px;background:#a7bfde;"></div>
<div style="position:absolute;left:351px;top:497px;width:34px;height:16px;background:#a7bfde;"></div>
<div style="position:absolute;left:385px;top:497px;width:35px;height:16px;background:#a7bfde;"></div>
<div style="position:absolute;left:420px;top:497px;width:35px;height:16px;background:#a7bfde;"></div>
<div style="position:absolute;left:455px;top:497px;width:34px;height:16px;background:#a7bfde;"></div>
<div style="position:absolute;left:489px;top:497px;width:40px;height:16px;background:#a7bfde;"></div>
<div style="position:absolute;left:248px;top:513px;width:34px;height:16px;background:#c7e6ee;"></div>
<div style="position:absolute;left:282px;top:513px;width:34px;height:16px;background:#c7e6ee;"></div>
<div style="position:absolute;left:316px;top:513px;width:35px;height:16px;background:#c7e6ee;"></div>
<div style="position:absolute;left:351px;top:513px;width:34px;height:16px;background:#c7e6ee;"></div>
<div style="position:absolute;left:385px;top:513px;width:35px;height:16px;background:#a7bfde;"></div>
<div style="position:absolute;left:420px;top:513px;width:35px;height:16px;background:#a7bfde;"></div>
<div style="position:absolute;left:455px;top:513px;width:34px;height:16px;background:#a7bfde;"></div>
<div style="position:absolute;left:489px;top:513px;width:40px;height:16px;background:#a7bfde;"></div>
<div style="position:absolute;left:248px;top:529px;width:34px;height:16px;background:#c7e6ee;"></div>
<div style="position:absolute;left:282px;top:529px;width:34px;height:16px;background:#c7e6ee;"></div>
<div style="position:absolute;left:316px;top:529px;width:35px;height:16px;background:#c7e6ee;"></div>
<div style="position:absolute;left:351px;top:529px;width:34px;height:16px;background:#c7e6ee;"></div>
<div style="position:absolute;left:385px;top:529px;width:35px;height:16px;background:#a7bfde;"></div>
<div style="position:absolute;left:420px;top:529px;width:35px;height:16px;background:#a7bfde;"></div>
<div style="position:absolute;left:455px;top:529px;width:34px;height:16px;background:#a7bfde;"></div>
<div style="position:absolute;left:489px;top:529px;width:40px;height:16px;background:#a7bfde;"></div>
<div style="position:absolute;left:248px;top:545px;width:34px;height:16px;background:#ffffff;"></div>
<div style="position:absolute;left:282px;top:545px;width:34px;height:16px;background:#ffffff;"></div>
<div style="position:absolute;left:316px;top:545px;width:35px;height:16px;background:#ffffff;"></div>
<div style="position:absolute;left:351px;top:545px;width:34px;height:16px;background:#ffffff;"></div>
<div style="position:absolute;left:385px;top:545px;width:35px;height:16px;background:#a7bfde;"></div>
<div style="position:absolute;left:420px;top:545px;width:35px;height:16px;background:#a7bfde;"></div>
<div style="position:absolute;left:455px;top:545px;width:34px;height:16px;background:#a7bfde;"></div>
<div style="position:absolute;left:489px;top:545px;width:40px;height:16px;background:#a7bfde;"></div>
<div style="position:absolute;left:248px;top:561px;width:34px;height:16px;background:#ffffff;"></div>
<div style="position:absolute;left:282px;top:561px;width:34px;height:16px;background:#ffffff;"></div>
<div style="position:absolute;left:316px;top:561px;width:35px;height:16px;background:#ffffff;"></div>
<div style="position:absolute;left:351px;top:561px;width:34px;height:16px;background:#ffffff;"></div>
<div style="position:absolute;left:385px;top:561px;width:35px;height:16px;background:#c7e6ee;"></div>
<div style="position:absolute;left:420px;top:561px;width:35px;height:16px;background:#c7e6ee;"></div>
<div style="position:absolute;left:455px;top:561px;width:34px;height:16px;background:#c7e6ee;"></div>
<div style="position:absolute;left:489px;top:561px;width:40px;height:16px;background:#c7e6ee;"></div>
<div style="position:absolute;left:248px;top:577px;width:34px;height:16px;background:#ffffff;"></div>
<div style="position:absolute;left:282px;top:577px;width:34px;height:16px;background:#ffffff;"></div>
<div style="position:absolute;left:316px;top:577px;width:35px;height:16px;background:#ffffff;"></div>
<div style="position:absolute;left:351px;top:577px;width:34px;height:16px;background:#ffffff;"></div>
<div style="position:absolute;left:385px;top:577px;width:35px;height:16px;background:#c7e6ee;"></div>
<div style="position:absolute;left:420px;top:577px;width:35px;height:16px;background:#c7e6ee;"></div>
<div style="position:absolute;left:455px;top:577px;width:34px;height:16px;background:#c7e6ee;"></div>
<div style="position:absolute;left:489px;top:577px;width:40px;height:16px;background:#c7e6ee;"></div>
<div style="position:absolute;left:248px;top:593px;width:34px;height:3px;background:#c7e6ee;"></div>
<div style="position:absolute;left:282px;top:593px;width:34px;height:3px;background:#c7e6ee;"></div>
<div style="position:absolute;left:316px;top:593px;width:35px;height:3px;background:#c7e6ee;"></div>
<div style="position:absolute;left:351px;top:593px;width:34px;height:3px;background:#c7e6ee;"></div>
<div style="position:absolute;left:385px;top:593px;width:35px;height:3px;background:#c7e6ee;"></div>
<div style="position:absolute;left:420px;top:593px;width:35px;height:3px;background:#c7e6ee;"></div>
<div style="position:absolute;left:455px;top:593px;width:34px;height:3px;background:#c7e6ee;"></div>
<div style="position:absolute;left:489px;top:593px;width:40px;height:3px;background:#c7e6ee;"></div>
<div style="position:absolute;left:282px;top:416px;width:1px;height:180px;background:#cdd3de;"></div>
<div style="position:absolute;left:316px;top:416px;width:1px;height:180px;background:#cdd3de;"></div>
<div style="position:absolute;left:351px;top:416px;width:1px;height:180px;background:#cdd3de;"></div>
<div style="position:absolute;left:385px;top:416px;width:1px;height:180px;background:#cdd3de;"></div>
<div style="position:absolute;left:420px;top:416px;width:1px;height:180px;background:#cdd3de;"></div>
<div style="position:absolute;left:455px;top:416px;width:1px;height:180px;background:#cdd3de;"></div>
<div style="position:absolute;left:489px;top:416px;width:1px;height:180px;background:#cdd3de;"></div>
<div style="position:absolute;left:529px;top:416px;width:1px;height:180px;background:#cdd3de;"></div>
<div style="position:absolute;left:248px;top:432px;width:281px;height:1px;background:#cdd3de;"></div>
<div style="position:absolute;left:248px;top:448px;width:281px;height:1px;background:#cdd3de;"></div>
<div style="position:absolute;left:248px;top:464px;width:281px;height:1px;background:#cdd3de;"></div>
<div style="position:absolute;left:248px;top:480px;width:281px;height:1px;background:#cdd3de;"></div>
<div style="position:absolute;left:248px;top:496px;width:281px;height:1px;background:#cdd3de;"></div>
<div style="position:absolute;left:248px;top:512px;width:281px;height:1px;background:#cdd3de;"></div>
<div style="position:absolute;left:248px;top:528px;width:281px;height:1px;background:#cdd3de;"></div>
<div style="position:absolute;left:248px;top:544px;width:281px;height:1px;background:#cdd3de;"></div>
<div style="position:absolute;left:248px;top:560px;width:281px;height:1px;background:#cdd3de;"></div>
<div style="position:absolute;left:248px;top:576px;width:281px;height:1px;background:#cdd3de;"></div>
<div style="position:absolute;left:248px;top:592px;width:281px;height:1px;background:#cdd3de;"></div>
<div class="t" style="left:249px;top:417.0px;width:32px;text-align:center;transform-origin:50% 0;transform:scaleX(0.94);color:#3a4152;">Mid</div>
<div class="t" style="left:283px;top:417.0px;width:32px;text-align:center;transform-origin:50% 0;transform:scaleX(0.94);color:#3a4152;">Delta</div>
<div class="t" style="left:317px;top:417.0px;width:33px;text-align:center;transform-origin:50% 0;transform:scaleX(0.94);color:#3a4152;">Theta</div>
<div class="t" style="left:352px;top:417.0px;width:32px;text-align:center;transform-origin:50% 0;transform:scaleX(0.94);color:#3a4152;">Vega</div>
<div class="t" style="left:386px;top:417.0px;width:33px;text-align:center;transform-origin:50% 0;transform:scaleX(0.94);color:#3a4152;">Orig...</div>
<div class="t" style="left:421px;top:417.0px;width:33px;text-align:center;transform-origin:50% 0;transform:scaleX(0.94);color:#3a4152;">IVChg</div>
<div class="t" style="left:456px;top:417.0px;width:32px;text-align:center;transform-origin:50% 0;transform:scaleX(0.94);color:#3a4152;">Model</div>
<div class="t" style="left:490px;top:417.0px;width:38px;text-align:center;transform-origin:50% 0;transform:scaleX(0.94);color:#3a4152;">Pos</div>
<div class="t" style="left:249.8px;top:435.0px;width:30.4px;text-align:right;transform-origin:100% 0;transform:scaleX(0.94);color:#ee2a2a;">49.7...</div>
<div class="t" style="left:283.8px;top:435.0px;width:30.4px;text-align:right;transform-origin:100% 0;transform:scaleX(0.94);color:#1c1c1c;">-69.55</div>
<div class="t" style="left:317.8px;top:435.0px;width:31.4px;text-align:right;transform-origin:100% 0;transform:scaleX(0.94);color:#1c1c1c;">-1.36</div>
<div class="t" style="left:352.8px;top:435.0px;width:30.4px;text-align:right;transform-origin:100% 0;transform:scaleX(0.94);color:#1c1c1c;">53.70</div>
<div class="t" style="left:249.8px;top:451.0px;width:30.4px;text-align:right;transform-origin:100% 0;transform:scaleX(0.94);color:#ee2a2a;">32.7...</div>
<div class="t" style="left:283.8px;top:451.0px;width:30.4px;text-align:right;transform-origin:100% 0;transform:scaleX(0.94);color:#1c1c1c;">-56.08</div>
<div class="t" style="left:317.8px;top:451.0px;width:31.4px;text-align:right;transform-origin:100% 0;transform:scaleX(0.94);color:#1c1c1c;">-1.53</div>
<div class="t" style="left:352.8px;top:451.0px;width:30.4px;text-align:right;transform-origin:100% 0;transform:scaleX(0.94);color:#1c1c1c;">60.50</div>
<div class="t" style="left:249.8px;top:467.0px;width:30.4px;text-align:right;transform-origin:100% 0;transform:scaleX(0.94);color:#ee2a2a;">19.5...</div>
<div class="t" style="left:283.8px;top:467.0px;width:30.4px;text-align:right;transform-origin:100% 0;transform:scaleX(0.94);color:#1c1c1c;">-40.82</div>
<div class="t" style="left:317.8px;top:467.0px;width:31.4px;text-align:right;transform-origin:100% 0;transform:scaleX(0.94);color:#1c1c1c;">-1.50</div>
<div class="t" style="left:352.8px;top:467.0px;width:30.4px;text-align:right;transform-origin:100% 0;transform:scaleX(0.94);color:#1c1c1c;">59.58</div>
<div class="t" style="left:249.8px;top:483.0px;width:30.4px;text-align:right;transform-origin:100% 0;transform:scaleX(0.94);color:#ee2a2a;">10.40</div>
<div class="t" style="left:283.8px;top:483.0px;width:30.4px;text-align:right;transform-origin:100% 0;transform:scaleX(0.94);color:#1c1c1c;">-26.21</div>
<div class="t" style="left:317.8px;top:483.0px;width:31.4px;text-align:right;transform-origin:100% 0;transform:scaleX(0.94);color:#1c1c1c;">-1.25</div>
<div class="t" style="left:352.8px;top:483.0px;width:30.4px;text-align:right;transform-origin:100% 0;transform:scaleX(0.94);color:#1c1c1c;">49.97</div>
<div class="t" style="left:249.8px;top:499.0px;width:30.4px;text-align:right;transform-origin:100% 0;transform:scaleX(0.94);color:#ee2a2a;">4.975</div>
<div class="t" style="left:283.8px;top:499.0px;width:30.4px;text-align:right;transform-origin:100% 0;transform:scaleX(0.94);color:#1c1c1c;">-14.74</div>
<div class="t" style="left:317.8px;top:499.0px;width:31.4px;text-align:right;transform-origin:100% 0;transform:scaleX(0.94);color:#1c1c1c;">-0.90</div>
<div class="t" style="left:352.8px;top:499.0px;width:30.4px;text-align:right;transform-origin:100% 0;transform:scaleX(0.94);color:#1c1c1c;">35.35</div>
<div class="t" style="left:249.8px;top:515.0px;width:30.4px;text-align:right;transform-origin:100% 0;transform:scaleX(0.94);color:#ee2a2a;">2.265</div>
<div class="t" style="left:283.8px;top:515.0px;width:30.4px;text-align:right;transform-origin:100% 0;transform:scaleX(0.94);color:#1c1c1c;">-7.55</div>
<div class="t" style="left:317.8px;top:515.0px;width:31.4px;text-align:right;transform-origin:100% 0;transform:scaleX(0.94);color:#1c1c1c;">-0.57</div>
<div class="t" style="left:352.8px;top:515.0px;width:30.4px;text-align:right;transform-origin:100% 0;transform:scaleX(0.94);color:#1c1c1c;">21.82</div>
<div class="t" style="left:249.8px;top:531.0px;width:30.4px;text-align:right;transform-origin:100% 0;transform:scaleX(0.94);color:#ee2a2a;">1.08</div>
<div class="t" style="left:283.8px;top:531.0px;width:30.4px;text-align:right;transform-origin:100% 0;transform:scaleX(0.94);color:#1c1c1c;">-3.83</div>
<div class="t" style="left:317.8px;top:531.0px;width:31.4px;text-align:right;transform-origin:100% 0;transform:scaleX(0.94);color:#1c1c1c;">-0.35</div>
<div class="t" style="left:352.8px;top:531.0px;width:30.4px;text-align:right;transform-origin:100% 0;transform:scaleX(0.94);color:#1c1c1c;">12.76</div>
<div class="t" style="left:249.8px;top:547.0px;width:30.4px;text-align:right;transform-origin:100% 0;transform:scaleX(0.94);color:#ee2a2a;">0.57</div>
<div class="t" style="left:283.8px;top:547.0px;width:30.4px;text-align:right;transform-origin:100% 0;transform:scaleX(0.94);color:#1c1c1c;">-2.05</div>
<div class="t" style="left:317.8px;top:547.0px;width:31.4px;text-align:right;transform-origin:100% 0;transform:scaleX(0.94);color:#1c1c1c;">-0.22</div>
<div class="t" style="left:352.8px;top:547.0px;width:30.4px;text-align:right;transform-origin:100% 0;transform:scaleX(0.94);color:#1c1c1c;">7.59</div>
<div class="t" style="left:249.8px;top:563.0px;width:30.4px;text-align:right;transform-origin:100% 0;transform:scaleX(0.94);color:#ee2a2a;">0.345</div>
<div class="t" style="left:283.8px;top:563.0px;width:30.4px;text-align:right;transform-origin:100% 0;transform:scaleX(0.94);color:#1c1c1c;">-1.22</div>
<div class="t" style="left:317.8px;top:563.0px;width:31.4px;text-align:right;transform-origin:100% 0;transform:scaleX(0.94);color:#1c1c1c;">-0.16</div>
<div class="t" style="left:352.8px;top:563.0px;width:30.4px;text-align:right;transform-origin:100% 0;transform:scaleX(0.94);color:#1c1c1c;">4.85</div>
<div class="t" style="left:249.8px;top:579.0px;width:30.4px;text-align:right;transform-origin:100% 0;transform:scaleX(0.94);color:#ee2a2a;">0.23</div>
<div class="t" style="left:283.8px;top:579.0px;width:30.4px;text-align:right;transform-origin:100% 0;transform:scaleX(0.94);color:#1c1c1c;">-0.78</div>
<div class="t" style="left:317.8px;top:579.0px;width:31.4px;text-align:right;transform-origin:100% 0;transform:scaleX(0.94);color:#1c1c1c;">-0.12</div>
<div class="t" style="left:352.8px;top:579.0px;width:30.4px;text-align:right;transform-origin:100% 0;transform:scaleX(0.94);color:#1c1c1c;">3.29</div>
<div style="position:absolute;left:529px;top:416px;width:15px;height:16px;background:#f5f7fb;"></div>
<div style="position:absolute;left:529px;top:432px;width:15px;height:1px;background:#cdd3de;"></div>
<div style="position:absolute;left:529px;top:416px;width:1px;height:17px;background:#cdd3de;"></div>
<div style="position:absolute;left:529px;top:433px;width:15px;height:163px;background:#dde1ea;"></div>
<div style="position:absolute;left:533px;top:489px;width:8px;height:21px;background:#a0a8b8;"></div>
<svg style="position:absolute;left:533px;top:438px" width="8" height="5"><path d="M0 4 L3.5 0.5 L7 4 Z" fill="#5a6070"/></svg>
<svg style="position:absolute;left:533px;top:587px" width="8" height="5"><path d="M0 0.5 L3.5 4 L7 0.5 Z" fill="#5a6070"/></svg>
<div style="position:absolute;left:0px;top:607px;width:545px;height:21px;background:#dadfe9;"></div>
<div style="position:absolute;left:-2px;top:610px;width:98px;height:15px;background:#fff;border:1px solid #a9b3c6;box-sizing:border-box;"></div>
<div class="t" style="left:-1px;top:611px;transform-origin:0 0;transform:scaleX(0.92);color:#111;">ned</div>
<svg style="position:absolute;left:87px;top:616px" width="6" height="4"><path d="M0 0 H5 L2.5 3 Z" fill="#666"/></svg>
<div style="position:absolute;left:103px;top:610px;width:70px;height:15px;background:#fff;border:1px solid #a9b3c6;box-sizing:border-box;"></div>
<div class="t" style="left:106px;top:611px;transform-origin:0 0;transform:scaleX(0.92);color:#111;">Auto</div>
<svg style="position:absolute;left:163px;top:616px" width="6" height="4"><path d="M0 0 H5 L2.5 3 Z" fill="#666"/></svg>
<div style="position:absolute;left:426px;top:612px;width:9px;height:9px;background:#fff;border:1px solid #8d96a8;box-sizing:border-box;"></div>
<div class="t" style="left:438px;top:611px;transform-origin:0 0;transform:scaleX(0.98);color:#1e2a44;">Ignore Today&#39;s Trades</div>
<div style="position:absolute;left:-1px;top:629px;width:546px;height:50px;background:#ffffff;border:1px solid #b3bbca;box-sizing:border-box;"></div>
<div style="position:absolute;left:0px;top:630px;width:544px;height:17px;background:#f5f7fb;"></div>
<div style="position:absolute;left:38px;top:630px;width:1px;height:46px;background:#cdd3de;"></div>
<div style="position:absolute;left:88px;top:630px;width:1px;height:46px;background:#cdd3de;"></div>
<div style="position:absolute;left:138px;top:630px;width:1px;height:46px;background:#cdd3de;"></div>
<div style="position:absolute;left:188px;top:630px;width:1px;height:46px;background:#cdd3de;"></div>
<div style="position:absolute;left:238px;top:630px;width:1px;height:46px;background:#cdd3de;"></div>
<div style="position:absolute;left:287px;top:630px;width:1px;height:46px;background:#cdd3de;"></div>
<div style="position:absolute;left:337px;top:630px;width:1px;height:46px;background:#cdd3de;"></div>
<div style="position:absolute;left:387px;top:630px;width:1px;height:46px;background:#cdd3de;"></div>
<div style="position:absolute;left:437px;top:630px;width:1px;height:46px;background:#cdd3de;"></div>
<div style="position:absolute;left:486px;top:630px;width:1px;height:46px;background:#cdd3de;"></div>
<div style="position:absolute;left:0px;top:646px;width:544px;height:1px;background:#cdd3de;"></div>
<div style="position:absolute;left:0px;top:662px;width:544px;height:1px;background:#cdd3de;"></div>
<div class="t" style="left:-7px;top:632.0px;width:44px;text-align:center;transform-origin:50% 0;transform:scaleX(0.94);color:#3a4152;">Cost</div>
<div class="t" style="left:-17px;top:648.5px;width:52px;text-align:right;transform-origin:100% 0;transform:scaleX(0.94);color:#1c1c1c;">1,837.80</div>
<div class="t" style="left:39px;top:632.0px;width:48px;text-align:center;transform-origin:50% 0;transform:scaleX(0.94);color:#3a4152;">Curr Cost</div>
<div class="t" style="left:41px;top:648.5px;width:44px;text-align:right;transform-origin:100% 0;transform:scaleX(0.94);color:#1c1c1c;">2,321.00</div>
<div class="t" style="left:89px;top:632.0px;width:48px;text-align:center;transform-origin:50% 0;transform:scaleX(0.94);color:#3a4152;">Commi...</div>
<div class="t" style="left:91px;top:648.5px;width:44px;text-align:right;transform-origin:100% 0;transform:scaleX(0.94);color:#1c1c1c;">2.80</div>
<div class="t" style="left:139px;top:632.0px;width:48px;text-align:center;transform-origin:50% 0;transform:scaleX(0.94);color:#3a4152;">PnL</div>
<div class="t" style="left:141px;top:648.5px;width:44px;text-align:right;transform-origin:100% 0;transform:scaleX(0.94);color:#2e9a2e;">483.20</div>
<div class="t" style="left:189px;top:632.0px;width:48px;text-align:center;transform-origin:50% 0;transform:scaleX(0.94);color:#3a4152;">PnL%</div>
<div class="t" style="left:191px;top:648.5px;width:44px;text-align:right;transform-origin:100% 0;transform:scaleX(0.94);color:#2e9a2e;">26.29%</div>
<div class="t" style="left:239px;top:632.0px;width:47px;text-align:center;transform-origin:50% 0;transform:scaleX(0.94);color:#3a4152;">Delta</div>
<div class="t" style="left:241px;top:648.5px;width:43px;text-align:right;transform-origin:100% 0;transform:scaleX(0.94);color:#1c1c1c;">9.47</div>
<div class="t" style="left:241px;top:664.5px;width:43px;text-align:right;transform-origin:100% 0;transform:scaleX(0.94);color:#1c1c1c;">0.00</div>
<div class="t" style="left:288px;top:632.0px;width:48px;text-align:center;transform-origin:50% 0;transform:scaleX(0.94);color:#3a4152;">Gamma</div>
<div class="t" style="left:290px;top:648.5px;width:44px;text-align:right;transform-origin:100% 0;transform:scaleX(0.94);color:#1c1c1c;">-0.39</div>
<div class="t" style="left:290px;top:664.5px;width:44px;text-align:right;transform-origin:100% 0;transform:scaleX(0.94);color:#1c1c1c;">0.00</div>
<div class="t" style="left:338px;top:632.0px;width:48px;text-align:center;transform-origin:50% 0;transform:scaleX(0.94);color:#3a4152;">Theta</div>
<div class="t" style="left:340px;top:648.5px;width:44px;text-align:right;transform-origin:100% 0;transform:scaleX(0.94);color:#1c1c1c;">215.21</div>
<div class="t" style="left:340px;top:664.5px;width:44px;text-align:right;transform-origin:100% 0;transform:scaleX(0.94);color:#1c1c1c;">0.00</div>
<div class="t" style="left:388px;top:632.0px;width:48px;text-align:center;transform-origin:50% 0;transform:scaleX(0.94);color:#3a4152;">Vega</div>
<div class="t" style="left:390px;top:648.5px;width:44px;text-align:right;transform-origin:100% 0;transform:scaleX(0.94);color:#1c1c1c;">-7.00</div>
<div class="t" style="left:390px;top:664.5px;width:44px;text-align:right;transform-origin:100% 0;transform:scaleX(0.94);color:#1c1c1c;">0.00</div>
<div class="t" style="left:438px;top:632.0px;width:47px;text-align:center;transform-origin:50% 0;transform:scaleX(0.94);color:#3a4152;">T/D</div>
<div class="t" style="left:440px;top:648.5px;width:43px;text-align:right;transform-origin:100% 0;transform:scaleX(0.94);color:#1c1c1c;">22.7</div>
<div class="t" style="left:440px;top:664.5px;width:43px;text-align:right;transform-origin:100% 0;transform:scaleX(0.94);color:#1c1c1c;">0</div>
<div class="t" style="left:487px;top:632.0px;width:56px;text-align:center;transform-origin:50% 0;transform:scaleX(0.94);color:#3a4152;">Plot</div>
<svg style="position:absolute;left:510px;top:650px" width="11" height="11">
<rect x="0.5" y="0.5" width="9" height="9" fill="#fff" stroke="#a8b0bc"/>
<path d="M2 5 L4 7.5 L8.5 2" stroke="#6a7282" stroke-width="1.1" fill="none"/></svg>
<svg style="position:absolute;left:510px;top:665px" width="11" height="11">
<rect x="0.5" y="0.5" width="9" height="9" fill="#fff" stroke="#a8b0bc"/>
<path d="M2 5 L4 7.5 L8.5 2" stroke="#6a7282" stroke-width="1.1" fill="none"/></svg>
<div style="position:absolute;left:555px;top:139px;width:525px;height:536px;background:#d5dbe8;"></div>
<div style="position:absolute;left:555px;top:139px;width:1px;height:536px;background:#a9b1c1;"></div>
<div style="position:absolute;left:556px;top:161px;width:524px;height:1px;background:#b3bbca;"></div>
<div style="position:absolute;left:556px;top:139px;width:65px;height:23px;background:#d8dde9;border-top:1px solid #aeb6c6;border-right:1px solid #aeb6c6;box-sizing:border-box;"></div>
<div class="t" style="left:488.5px;top:144px;width:200px;text-align:center;transform:scaleX(0.92);color:#1e2a44;">Risk Chart</div>
<div style="position:absolute;left:621px;top:140px;width:67px;height:22px;background:#cdd3e0;border:1px solid #aeb6c6;border-left:none;box-sizing:border-box;"></div>
<div class="t" style="left:554.5px;top:144px;width:200px;text-align:center;transform:scaleX(0.92);color:#1e2a44;">Price Chart</div>
<div style="position:absolute;left:688px;top:140px;width:106px;height:22px;background:#cdd3e0;border:1px solid #aeb6c6;border-left:none;box-sizing:border-box;"></div>
<div class="t" style="left:641.0px;top:144px;width:200px;text-align:center;transform:scaleX(0.92);color:#1e2a44;">Movement Analysis</div>
<div style="position:absolute;left:794px;top:140px;width:55px;height:22px;background:#cdd3e0;border:1px solid #aeb6c6;border-left:none;box-sizing:border-box;"></div>
<div class="t" style="left:721.5px;top:144px;width:200px;text-align:center;transform:scaleX(0.92);color:#1e2a44;">Volatility</div>
<div style="position:absolute;left:849px;top:140px;width:135px;height:22px;background:#cdd3e0;border:1px solid #aeb6c6;border-left:none;box-sizing:border-box;"></div>
<div class="t" style="left:816.5px;top:144px;width:200px;text-align:center;transform:scaleX(0.92);color:#1e2a44;">Statistics &amp; Fundamentals</div>
<div class="t" style="left:561px;top:166px;transform-origin:0 0;transform:scaleX(0.92);color:#1e2a44;">Vol Adjust</div>
<div style="position:absolute;left:610px;top:163px;width:46px;height:18px;background:#fff;border:1px solid #aab3c4;box-sizing:border-box;"></div>
<div class="t" style="left:440px;top:166px;width:200px;text-align:right;transform-origin:100% 0;transform:scaleX(0.92);color:#111;">0</div>
<svg style="position:absolute;left:645px;top:166px" width="7" height="12"><path d="M0.5 4 L3.5 1 L6.5 4 Z M0.5 8 L3.5 11 L6.5 8 Z" fill="#333"/></svg>
<div class="t" style="left:989px;top:166px;transform-origin:0 0;transform:scaleX(0.92);color:#1e2a44;">Projection</div>
<div style="position:absolute;left:1036px;top:163px;width:50px;height:18px;background:#fff;border:1px solid #aab3c4;box-sizing:border-box;"></div>
<div class="t" style="left:1039px;top:166px;transform-origin:0 0;transform:scaleX(0.92);color:#111;">23/05/20</div>
<div style="position:absolute;left:556px;top:183px;width:524px;height:475px;background:#fff;"></div>
<svg style="position:absolute;left:0;top:0" width="1080" height="675" font-family="Liberation Sans, sans-serif">
<rect x="757" y="198.5" width="247.70000000000005" height="278.1" fill="#93cbdb"/>
<rect x="818" y="198.5" width="124.29999999999995" height="278.1" fill="#4e80be"/>
<line x1="601" y1="198.5" x2="1080" y2="198.5" stroke="#e2e2e2" stroke-width="1" opacity="0.85"/>
<line x1="601" y1="218.4" x2="1080" y2="218.4" stroke="#e2e2e2" stroke-width="1" opacity="0.85"/>
<line x1="601" y1="238.2" x2="1080" y2="238.2" stroke="#e2e2e2" stroke-width="1" opacity="0.85"/>
<line x1="601" y1="258.1" x2="1080" y2="258.1" stroke="#e2e2e2" stroke-width="1" opacity="0.85"/>
<line x1="601" y1="277.9" x2="1080" y2="277.9" stroke="#e2e2e2" stroke-width="1" opacity="0.85"/>
<line x1="601" y1="297.8" x2="1080" y2="297.8" stroke="#e2e2e2" stroke-width="1" opacity="0.85"/>
<line x1="601" y1="317.7" x2="1080" y2="317.7" stroke="#e2e2e2" stroke-width="1" opacity="0.85"/>
<line x1="601" y1="337.5" x2="1080" y2="337.5" stroke="#e2e2e2" stroke-width="1" opacity="0.85"/>
<line x1="601" y1="357.4" x2="1080" y2="357.4" stroke="#e2e2e2" stroke-width="1" opacity="0.85"/>
<line x1="601" y1="377.2" x2="1080" y2="377.2" stroke="#e2e2e2" stroke-width="1" opacity="0.85"/>
<line x1="601" y1="397.1" x2="1080" y2="397.1" stroke="#e2e2e2" stroke-width="1" opacity="0.85"/>
<line x1="601" y1="417.0" x2="1080" y2="417.0" stroke="#e2e2e2" stroke-width="1" opacity="0.85"/>
<line x1="601" y1="436.8" x2="1080" y2="436.8" stroke="#e2e2e2" stroke-width="1" opacity="0.85"/>
<line x1="601" y1="456.7" x2="1080" y2="456.7" stroke="#e2e2e2" stroke-width="1" opacity="0.85"/>
<line x1="601" y1="476.5" x2="1080" y2="476.5" stroke="#e2e2e2" stroke-width="1" opacity="0.85"/>
<line x1="617.8" y1="198.5" x2="617.8" y2="477" stroke="#e2e2e2" stroke-width="1" opacity="0.85"/>
<line x1="705.6" y1="198.5" x2="705.6" y2="477" stroke="#e2e2e2" stroke-width="1" opacity="0.85"/>
<line x1="793.4" y1="198.5" x2="793.4" y2="477" stroke="#e2e2e2" stroke-width="1" opacity="0.85"/>
<line x1="881.2" y1="198.5" x2="881.2" y2="477" stroke="#e2e2e2" stroke-width="1" opacity="0.85"/>
<line x1="969.0" y1="198.5" x2="969.0" y2="477" stroke="#e2e2e2" stroke-width="1" opacity="0.85"/>
<line x1="1056.8" y1="198.5" x2="1056.8" y2="477" stroke="#e2e2e2" stroke-width="1" opacity="0.85"/>
<line x1="604.5" y1="198" x2="604.5" y2="477" stroke="#e4e4e4"/>
<line x1="601" y1="278" x2="1080" y2="278" stroke="#5e5e5e" stroke-width="1.7"/>
<text transform="translate(599.00 202.90) scale(0.87 1)" font-size="10" text-anchor="end" fill="#333">44%</text>
<text transform="translate(599.00 222.76) scale(0.87 1)" font-size="10" text-anchor="end" fill="#333">33%</text>
<text transform="translate(599.00 242.62) scale(0.87 1)" font-size="10" text-anchor="end" fill="#333">22%</text>
<text transform="translate(599.00 262.48) scale(0.87 1)" font-size="10" text-anchor="end" fill="#333">11%</text>
<text transform="translate(599.00 282.34) scale(0.87 1)" font-size="10" text-anchor="end" fill="#333">0%</text>
<text transform="translate(599.00 302.20) scale(0.87 1)" font-size="10" text-anchor="end" fill="#333">-11%</text>
<text transform="translate(599.00 322.06) scale(0.87 1)" font-size="10" text-anchor="end" fill="#333">-22%</text>
<text transform="translate(599.00 341.92) scale(0.87 1)" font-size="10" text-anchor="end" fill="#333">-33%</text>
<text transform="translate(599.00 361.78) scale(0.87 1)" font-size="10" text-anchor="end" fill="#333">-44%</text>
<text transform="translate(599.00 381.64) scale(0.87 1)" font-size="10" text-anchor="end" fill="#333">-54%</text>
<text transform="translate(599.00 401.50) scale(0.87 1)" font-size="10" text-anchor="end" fill="#333">-65%</text>
<text transform="translate(599.00 421.36) scale(0.87 1)" font-size="10" text-anchor="end" fill="#333">-76%</text>
<text transform="translate(599.00 441.22) scale(0.87 1)" font-size="10" text-anchor="end" fill="#333">-87%</text>
<text transform="translate(599.00 461.08) scale(0.87 1)" font-size="10" text-anchor="end" fill="#333">-98%</text>
<text transform="translate(599.00 480.94) scale(0.87 1)" font-size="10" text-anchor="end" fill="#333">-109%</text>
<text transform="translate(617.80 491.00) scale(0.87 1)" font-size="10" text-anchor="middle" fill="#222">800</text>
<text transform="translate(705.60 491.00) scale(0.87 1)" font-size="10" text-anchor="middle" fill="#222">850</text>
<text transform="translate(793.40 491.00) scale(0.87 1)" font-size="10" text-anchor="middle" fill="#222">900</text>
<text transform="translate(881.20 491.00) scale(0.87 1)" font-size="10" text-anchor="middle" fill="#222">950</text>
<text transform="translate(969.00 491.00) scale(0.87 1)" font-size="10" text-anchor="middle" fill="#222">1000</text>
<text transform="translate(1056.80 491.00) scale(0.87 1)" font-size="10" text-anchor="middle" fill="#222">1050</text>
<text transform="translate(617.80 195.00) scale(0.87 1)" font-size="10" text-anchor="middle" fill="#222">-15.7%</text>
<text transform="translate(705.60 195.00) scale(0.87 1)" font-size="10" text-anchor="middle" fill="#222">-10.5%</text>
<text transform="translate(793.40 195.00) scale(0.87 1)" font-size="10" text-anchor="middle" fill="#222">-5.2%</text>
<text transform="translate(881.20 195.00) scale(0.87 1)" font-size="10" text-anchor="middle" fill="#222">0.1%</text>
<text transform="translate(969.00 195.00) scale(0.87 1)" font-size="10" text-anchor="middle" fill="#222">5.3%</text>
<text transform="translate(1056.80 195.00) scale(0.87 1)" font-size="10" text-anchor="middle" fill="#222">10.6%</text>
<rect x="1020.5" y="183.5" width="26" height="11" fill="#eef2f8" stroke="#7a8598" stroke-width="1"/>
<text transform="translate(1033.50 193.00) scale(0.87 1)" font-size="10" text-anchor="middle" fill="#333">9.2%</text>
<text transform="translate(766.00 201.00) rotate(-90) scale(0.87 1)" font-size="10" text-anchor="end" fill="#5a8cc0">879.08</text>
<text transform="translate(828.00 201.00) rotate(-90) scale(0.87 1)" font-size="10" text-anchor="end" fill="#8fb6e2">914.29</text>
<text transform="translate(937.00 201.00) rotate(-90) scale(0.87 1)" font-size="10" text-anchor="end" fill="#8fb6e2">984.71</text>
<text transform="translate(1003.00 201.00) rotate(-90) scale(0.87 1)" font-size="10" text-anchor="end" fill="#5a8cc0">1019.92</text>
<line x1="805.3" y1="198.5" x2="805.3" y2="477" stroke="#a030a0" stroke-width="1.2" stroke-dasharray="3 3"/>
<text transform="translate(806.10 475.00) rotate(-90) scale(0.8 1)" font-size="10" text-anchor="start" fill="#8a2a9a">906.54</text>
<line x1="956.7" y1="198.5" x2="956.7" y2="477" stroke="#a030a0" stroke-width="1.2" stroke-dasharray="3 3"/>
<text transform="translate(957.50 475.00) rotate(-90) scale(0.8 1)" font-size="10" text-anchor="start" fill="#8a2a9a">992.86</text>
<text transform="translate(871.00 469.00) scale(0.87 1)" font-size="10" text-anchor="start" fill="#a030b0">2.6%</text>
<text transform="translate(1041.00 469.00) scale(0.87 1)" font-size="10" text-anchor="start" fill="#a030b0">97.4%</text>
<path d="M696 241.7 L741 278 L759 296" stroke="#9088d8" stroke-width="1.2" fill="none"/>
<path d="M967.2 296 L981 276.5" stroke="#9088d8" stroke-width="1.2" fill="none"/>
<path d="M601 213.8 C601.6 213.9 600.2 213.7 604.9 214.4 C609.6 215.1 621.5 216.4 629.3 217.8 C637.1 219.2 644.2 220.7 651.6 222.8 C659.0 224.9 666.4 227.4 673.8 230.6 C681.2 233.8 692.3 239.8 696 241.7" stroke="#77d060" stroke-width="1.2" fill="none"/>
<path d="M980 277.5 C984.1 273.2 998.0 258.0 1004.7 251.6 C1011.4 245.2 1013.8 243.7 1020 239 C1026.2 234.3 1038.3 226.2 1042 223.6" stroke="#f4b090" stroke-width="6" opacity="0.65" fill="none"/>
<path d="M981 276.5 C985.0 272.4 996.0 259.3 1004.7 251.6 C1013.4 243.9 1024.7 235.4 1033 230.2 C1041.3 225.0 1046.7 223.0 1054.5 220.5 C1062.3 218.0 1075.8 215.9 1080 215" stroke="#66cc44" stroke-width="1.4" fill="none"/>
<path d="M759.0 296.3 L762.0 299.0 L765.0 301.9 L768.1 304.9 L771.1 308.0 L774.1 311.2 L777.1 314.5 L780.1 317.9 L783.1 321.3 L786.2 324.8 L789.2 328.2 L792.2 331.7 L795.2 335.2 L798.2 338.7 L801.2 342.1 L804.3 345.5 L807.3 348.8 L810.3 352.0 L813.3 355.2 L816.3 358.3 L819.3 361.3 L822.4 364.2 L825.4 366.9 L828.4 369.5 L831.4 372.0 L834.4 374.4 L837.5 376.6 L840.5 378.6 L843.5 380.5 L846.5 382.2 L849.5 383.7 L852.5 385.1 L855.6 386.2 L858.6 387.2 L861.6 388.0 L864.6 388.5 L867.6 388.9 L870.6 389.1 L873.7 389.0 L876.7 388.8 L879.7 388.3 L882.7 387.7 L885.7 386.8 L888.7 385.7 L891.8 384.4 L894.8 382.9 L897.8 381.2 L900.8 379.3 L903.8 377.2 L906.9 374.9 L909.9 372.4 L912.9 369.7 L915.9 366.8 L918.9 363.7 L921.9 360.5 L925.0 357.1 L928.0 353.5 L931.0 349.7 L934.0 345.8 L937.0 341.8 L940.0 337.6 L943.1 333.3 L946.1 328.9 L949.1 324.3 L952.1 319.6 L955.1 314.9 L958.1 310.1 L961.2 305.2 L964.2 300.2 L967.2 295.2" stroke="#e03c3c" stroke-width="1.4" fill="none" stroke-linejoin="round"/>
<path d="M601 212.2 L792.5 212.2 L838.3 460.5 L924.6 460.5 L969.2 212.2 L1080 212.2" stroke="#4848c8" stroke-width="1.6" fill="none"/>
<circle cx="1033" cy="230.2" r="3.2" fill="#00e8f0" stroke="#1a5a6a" stroke-width="1"/>
<rect x="562" y="224" width="39" height="11" fill="#008a00"/>
<text transform="translate(598.00 233.50) scale(0.87 1)" font-size="10" text-anchor="end" fill="#fff">26%</text>
<rect x="608.5" y="203.5" width="140" height="71" rx="5" fill="#eef2fa" fill-opacity="0.62" stroke="#8d99ad"/>
<rect x="615" y="210" width="3" height="12" fill="#e83030"/>
<rect x="615" y="222.0" width="3" height="10" fill="#8ab0ea"/>
<rect x="615" y="233.6" width="3" height="10" fill="#8ab0ea"/>
<rect x="615" y="245.2" width="3" height="10" fill="#8ab0ea"/>
<rect x="615" y="256.8" width="3" height="10" fill="#8ab0ea"/>
<text transform="translate(618.00 220.00) scale(0.9 1)" font-size="10" text-anchor="start" fill="#555">-2.80 Realized PnL</text>
<text transform="translate(618.00 231.50) scale(0.9 1)" font-size="10" text-anchor="start" fill="#444">+1</text>
<text transform="translate(630.00 231.50) scale(0.9 1)" font-size="10" text-anchor="start" fill="#4a4af0">24may. 975 Call Δ</text>
<text transform="translate(740.00 231.50) scale(0.87 1)" font-size="10" text-anchor="end" fill="#4a4af0">96.53</text>
<text transform="translate(618.00 243.10) scale(0.9 1)" font-size="10" text-anchor="start" fill="#444">+1</text>
<text transform="translate(630.00 243.10) scale(0.9 1)" font-size="10" text-anchor="start" fill="#4a4af0">24may. 925 Put Δ</text>
<text transform="translate(740.00 243.10) scale(0.87 1)" font-size="10" text-anchor="end" fill="#4a4af0">-1.08</text>
<text transform="translate(618.00 254.70) scale(0.9 1)" font-size="10" text-anchor="start" fill="#444">-1</text>
<text transform="translate(628.00 254.70) scale(0.9 1)" font-size="10" text-anchor="start" fill="#f05050">24may. 1000 Call Δ</text>
<text transform="translate(742.00 254.70) scale(0.87 1)" font-size="10" text-anchor="end" fill="#f05050">86.66</text>
<text transform="translate(618.00 266.30) scale(0.9 1)" font-size="10" text-anchor="start" fill="#444">-1</text>
<text transform="translate(628.00 266.30) scale(0.9 1)" font-size="10" text-anchor="start" fill="#f05050">24may. 900 Put Δ</text>
<text transform="translate(740.00 266.30) scale(0.87 1)" font-size="10" text-anchor="end" fill="#f05050">-0.68</text>
<rect x="608.5" y="425.5" width="88" height="47" rx="5" fill="#eef2fa" fill-opacity="0.9" stroke="#8d99ad"/>
<text transform="translate(614.00 442.50) scale(0.87 1)" font-size="10" text-anchor="start" fill="#8a86d8">24/05/2024 (0)</text>
<text transform="translate(614.00 454.00) scale(0.87 1)" font-size="10" text-anchor="start" fill="#f06060">23/05/2024 (1) T+0</text>
<text transform="translate(614.00 465.50) scale(0.87 1)" font-size="10" text-anchor="start" fill="#8ab0ea">23/05/2024 (1) T+0</text>
<text transform="translate(695.00 469.00) scale(0.87 1)" font-size="10" text-anchor="start" fill="#a030b0">0.0%</text>
<rect x="560.5" y="495.5" width="530" height="158.5" rx="5" fill="#e9eff8" stroke="#8a96a8"/>
<text transform="translate(583.00 523.00) scale(0.87 1)" font-size="10" text-anchor="middle" fill="#555">PnL</text>
<text transform="translate(583.00 560.00) scale(0.87 1)" font-size="10" text-anchor="middle" fill="#555">Delta</text>
<text transform="translate(583.00 588.00) scale(0.87 1)" font-size="10" text-anchor="middle" fill="#555">Gamma</text>
<text transform="translate(583.00 615.00) scale(0.87 1)" font-size="10" text-anchor="middle" fill="#555">Theta</text>
<text transform="translate(583.00 643.00) scale(0.87 1)" font-size="10" text-anchor="middle" fill="#555">Vega</text>
<rect x="604.8" y="514" width="58.200000000000045" height="5" fill="#5577ee"/>
<rect x="663" y="516.3" width="87.60000000000002" height="2.7" fill="#5577ee"/>
<rect x="750.6" y="519" width="87.89999999999998" height="4.3" fill="#f07878"/>
<rect x="838.5" y="519" width="87.5" height="9.3" fill="#f07878"/>
<rect x="926" y="519" width="86.5" height="1.5" fill="#f07878"/>
<rect x="1012.5" y="514.3" width="67.5" height="4.7" fill="#5577ee"/>
<path d="M604.8 514 L663 514 L663 516.3 L750.6 516.3 L750.6 523.3 L838.5 523.3 L838.5 528.3 L926 528.3 L926 520.5 L1012.5 520.5 L1012.5 514.3 L1080 514.3" stroke="#6e6e6e" stroke-width="1.1" fill="none"/>
<line x1="604.8" y1="519" x2="1080" y2="519" stroke="#6e6e6e" stroke-width="1.1"/>
<rect x="604.8" y="555.5" width="58.200000000000045" height="0.5" fill="#5577ee"/>
<rect x="663" y="556" width="87.60000000000002" height="4.6" fill="#f07878"/>
<rect x="750.6" y="556" width="87.89999999999998" height="7.4" fill="#f07878"/>
<rect x="838.5" y="554.8" width="87.5" height="1.2" fill="#5577ee"/>
<rect x="926" y="547.5" width="86.5" height="8.5" fill="#5577ee"/>
<rect x="1012.5" y="554.5" width="67.5" height="1.5" fill="#5577ee"/>
<path d="M604.8 555.5 L663 555.5 L663 560.6 L750.6 560.6 L750.6 563.4 L838.5 563.4 L838.5 554.8 L926 554.8 L926 547.5 L1012.5 547.5 L1012.5 554.5 L1080 554.5" stroke="#6e6e6e" stroke-width="1.1" fill="none"/>
<line x1="604.8" y1="556" x2="1080" y2="556" stroke="#6e6e6e" stroke-width="1.1"/>
<rect x="604.8" y="583.8" width="58.200000000000045" height="0.8" fill="#f07878"/>
<rect x="663" y="583.8" width="87.60000000000002" height="3.1" fill="#f07878"/>
<rect x="750.6" y="583.4" width="87.89999999999998" height="0.4" fill="#5577ee"/>
<rect x="838.5" y="574.5" width="87.5" height="9.3" fill="#5577ee"/>
<rect x="926" y="583.8" width="86.5" height="3" fill="#f07878"/>
<rect x="1012.5" y="583.8" width="67.5" height="3" fill="#f07878"/>
<path d="M604.8 584.5999999999999 L663 584.5999999999999 L663 586.9 L750.6 586.9 L750.6 583.4 L838.5 583.4 L838.5 574.5 L926 574.5 L926 586.8 L1012.5 586.8 L1012.5 586.8 L1080 586.8" stroke="#6e6e6e" stroke-width="1.1" fill="none"/>
<line x1="604.8" y1="583.8" x2="1080" y2="583.8" stroke="#6e6e6e" stroke-width="1.1"/>
<rect x="604.8" y="607.9" width="58.200000000000045" height="2.5" fill="#5577ee"/>
<rect x="663" y="603.6" width="87.60000000000002" height="6.8" fill="#5577ee"/>
<rect x="750.6" y="606.1999999999999" width="87.89999999999998" height="4.2" fill="#5577ee"/>
<rect x="838.5" y="610.4" width="87.5" height="9.6" fill="#f07878"/>
<rect x="926" y="608.9" width="86.5" height="1.5" fill="#5577ee"/>
<rect x="1012.5" y="607.4" width="67.5" height="3" fill="#5577ee"/>
<path d="M604.8 607.9 L663 607.9 L663 603.6 L750.6 603.6 L750.6 606.1999999999999 L838.5 606.1999999999999 L838.5 620.0 L926 620.0 L926 608.9 L1012.5 608.9 L1012.5 607.4 L1080 607.4" stroke="#6e6e6e" stroke-width="1.1" fill="none"/>
<line x1="604.8" y1="610.4" x2="1080" y2="610.4" stroke="#6e6e6e" stroke-width="1.1"/>
<rect x="604.8" y="639.3" width="58.200000000000045" height="1.2" fill="#f07878"/>
<rect x="663" y="639.3" width="87.60000000000002" height="4" fill="#f07878"/>
<rect x="750.6" y="639.3" width="87.89999999999998" height="0.8" fill="#f07878"/>
<rect x="838.5" y="629.4" width="87.5" height="9.9" fill="#5577ee"/>
<rect x="926" y="639.3" width="86.5" height="2.2" fill="#f07878"/>
<rect x="1012.5" y="639.3" width="67.5" height="3" fill="#f07878"/>
<path d="M604.8 640.5 L663 640.5 L663 643.3 L750.6 643.3 L750.6 640.0999999999999 L838.5 640.0999999999999 L838.5 629.4 L926 629.4 L926 641.5 L1012.5 641.5 L1012.5 642.3 L1080 642.3" stroke="#6e6e6e" stroke-width="1.1" fill="none"/>
<line x1="604.8" y1="639.3" x2="1080" y2="639.3" stroke="#6e6e6e" stroke-width="1.1"/>
<text transform="translate(618.00 529.00) scale(0.87 1)" font-size="10" text-anchor="middle" fill="#6a6af0">626</text>
<text transform="translate(618.00 537.00) scale(0.87 1)" font-size="10" text-anchor="middle" fill="#6a6af0">34%</text>
<text transform="translate(705.50 529.00) scale(0.87 1)" font-size="10" text-anchor="middle" fill="#6a6af0">311</text>
<text transform="translate(705.50 537.00) scale(0.87 1)" font-size="10" text-anchor="middle" fill="#6a6af0">17%</text>
<text transform="translate(793.50 509.00) scale(0.87 1)" font-size="10" text-anchor="middle" fill="#f06a6a">-31%</text>
<text transform="translate(793.50 519.00) scale(0.87 1)" font-size="10" text-anchor="middle" fill="#f06a6a">-570</text>
<text transform="translate(881.00 509.00) scale(0.87 1)" font-size="10" text-anchor="middle" fill="#f06a6a">-61%</text>
<text transform="translate(881.00 519.00) scale(0.87 1)" font-size="10" text-anchor="middle" fill="#f06a6a">-1118</text>
<text transform="translate(969.00 509.00) scale(0.87 1)" font-size="10" text-anchor="middle" fill="#f06a6a">-8%</text>
<text transform="translate(969.00 519.00) scale(0.87 1)" font-size="10" text-anchor="middle" fill="#f06a6a">-154</text>
<text transform="translate(1057.00 529.00) scale(0.87 1)" font-size="10" text-anchor="middle" fill="#6a6af0">578</text>
<text transform="translate(1057.00 537.00) scale(0.87 1)" font-size="10" text-anchor="middle" fill="#6a6af0">31%</text>
<text transform="translate(618.00 556.00) scale(0.87 1)" font-size="10" text-anchor="middle" fill="#f06a6a">-2.07</text>
<text transform="translate(705.50 556.00) scale(0.87 1)" font-size="10" text-anchor="middle" fill="#f06a6a">-12.11</text>
<text transform="translate(793.50 556.00) scale(0.87 1)" font-size="10" text-anchor="middle" fill="#f06a6a">-20.08</text>
<text transform="translate(881.00 565.50) scale(0.87 1)" font-size="10" text-anchor="middle" fill="#6a6af0">4.66</text>
<text transform="translate(969.00 565.50) scale(0.87 1)" font-size="10" text-anchor="middle" fill="#6a6af0">24.39</text>
<text transform="translate(1057.00 565.50) scale(0.87 1)" font-size="10" text-anchor="middle" fill="#6a6af0">5.13</text>
<text transform="translate(618.00 584.00) scale(0.87 1)" font-size="10" text-anchor="middle" fill="#f06a6a">-0.10</text>
<text transform="translate(705.50 584.00) scale(0.87 1)" font-size="10" text-anchor="middle" fill="#f06a6a">-0.28</text>
<text transform="translate(793.50 592.00) scale(0.87 1)" font-size="10" text-anchor="middle" fill="#6a6af0">0.09</text>
<text transform="translate(881.00 592.00) scale(0.87 1)" font-size="10" text-anchor="middle" fill="#6a6af0">0.80</text>
<text transform="translate(969.00 584.00) scale(0.87 1)" font-size="10" text-anchor="middle" fill="#f06a6a">-0.23</text>
<text transform="translate(1057.00 584.00) scale(0.87 1)" font-size="10" text-anchor="middle" fill="#f06a6a">-0.26</text>
<text transform="translate(618.00 620.00) scale(0.87 1)" font-size="10" text-anchor="middle" fill="#6a6af0">112.85</text>
<text transform="translate(705.50 620.00) scale(0.87 1)" font-size="10" text-anchor="middle" fill="#6a6af0">409.56</text>
<text transform="translate(793.50 620.00) scale(0.87 1)" font-size="10" text-anchor="middle" fill="#6a6af0">217.50</text>
<text transform="translate(881.00 611.00) scale(0.87 1)" font-size="10" text-anchor="middle" fill="#f06a6a">-422.58</text>
<text transform="translate(969.00 620.00) scale(0.87 1)" font-size="10" text-anchor="middle" fill="#6a6af0">68.75</text>
<text transform="translate(1057.00 620.00) scale(0.87 1)" font-size="10" text-anchor="middle" fill="#6a6af0">152.89</text>
<text transform="translate(618.00 640.00) scale(0.87 1)" font-size="10" text-anchor="middle" fill="#f06a6a">-1.99</text>
<text transform="translate(705.50 640.00) scale(0.87 1)" font-size="10" text-anchor="middle" fill="#f06a6a">-6.75</text>
<text transform="translate(793.50 640.00) scale(0.87 1)" font-size="10" text-anchor="middle" fill="#f06a6a">-1.20</text>
<text transform="translate(881.00 648.00) scale(0.87 1)" font-size="10" text-anchor="middle" fill="#6a6af0">13.44</text>
<text transform="translate(969.00 640.00) scale(0.87 1)" font-size="10" text-anchor="middle" fill="#f06a6a">-3.05</text>
<text transform="translate(1057.00 640.00) scale(0.87 1)" font-size="10" text-anchor="middle" fill="#f06a6a">-4.91</text>
<rect x="1012.5" y="481.5" width="42" height="172" rx="4" fill="#e2e8f0" fill-opacity="0.75" stroke="#8a96a8"/>
<rect x="1008" y="510.5" width="50" height="9" fill="#d8e0ee" opacity="0.7"/>
<rect x="1008" y="551" width="50" height="9" fill="#d8e0ee" opacity="0.7"/>
<rect x="1008" y="578.5" width="50" height="9" fill="#d8e0ee" opacity="0.7"/>
<rect x="1008" y="606" width="50" height="9" fill="#d8e0ee" opacity="0.7"/>
<rect x="1008" y="634" width="50" height="9" fill="#d8e0ee" opacity="0.7"/>
<text transform="translate(1033.50 491.00) scale(0.87 1)" font-size="10" text-anchor="middle" fill="#222">1036.70</text>
<text transform="translate(1033.5 519.5) scale(0.9 1)" font-size="11" text-anchor="middle" stroke="#3333dd" stroke-width="0.1" fill="#3333dd">483</text>
<text transform="translate(1033.5 533) scale(0.9 1)" font-size="11" text-anchor="middle" stroke="#3333dd" stroke-width="0.1" fill="#3333dd">26.3%</text>
<text transform="translate(1033.5 560) scale(0.9 1)" font-size="11" text-anchor="middle" stroke="#3333dd" stroke-width="0.1" fill="#3333dd">9.47</text>
<text transform="translate(1033.5 588) scale(0.9 1)" font-size="11" text-anchor="middle" stroke="#ee2222" stroke-width="0.1" fill="#ee2222">-0.39</text>
<text transform="translate(1033.5 615) scale(0.9 1)" font-size="11" text-anchor="middle" stroke="#3333dd" stroke-width="0.1" fill="#3333dd">215.21</text>
<text transform="translate(1033.5 643) scale(0.9 1)" font-size="11" text-anchor="middle" stroke="#ee2222" stroke-width="0.1" fill="#ee2222">-7.00</text>
</svg>
<div style="position:absolute;left:556px;top:658px;width:524px;height:17px;background:#283552;"></div>
<div class="t" style="left:1045px;top:661px;transform-origin:0 0;transform:scaleX(0.98);color:#e8ecf4;-webkit-text-stroke:0;">100%</div>
</div></body></html>
